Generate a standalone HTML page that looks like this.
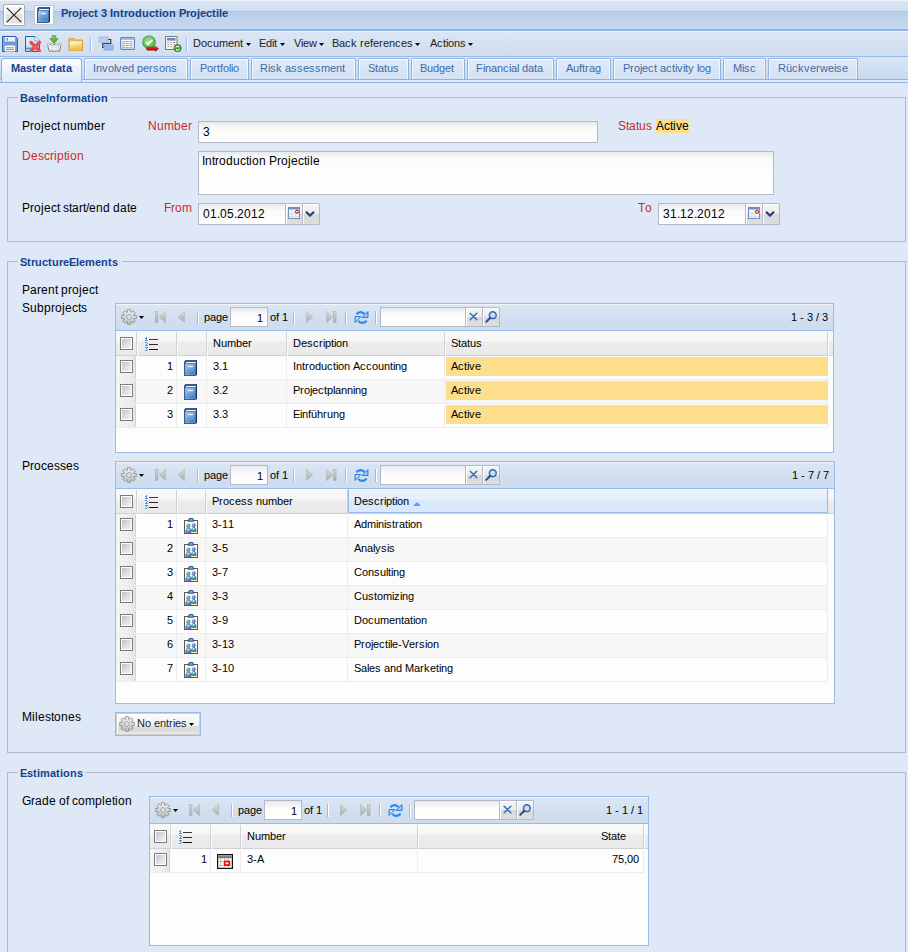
<!DOCTYPE html><html><head><meta charset="utf-8"><style>
html,body{margin:0;padding:0;}
body{width:908px;height:952px;overflow:hidden;position:relative;background:#dfe8f6;font-family:"Liberation Sans", sans-serif;}
.a{position:absolute;}
.t{position:absolute;white-space:nowrap;font-family:"Liberation Sans", sans-serif;font-kerning:none;}
.t i{display:inline-block;font-style:normal;}
.w1{width:1px}
.w2{width:2px}
.w3{width:3px}
.w4{width:4px}
.w5{width:5px}
.w6{width:6px}
.w7{width:7px}
.w8{width:8px}
.w9{width:9px}
.w10{width:10px}
.w11{width:11px}
.w12{width:12px}
.w13{width:13px}
.w14{width:14px}
.w15{width:15px}
.cb{position:absolute;width:11px;height:11px;border:1px solid #7b7b7b;background:linear-gradient(135deg,#b9bdc6,#dfe1e5 55%,#f6f6f6);box-shadow:inset 0 0 0 1px #fff;}
.inp{position:absolute;border:1px solid #b5b8c8;background:linear-gradient(#e8e9ea,#fbfbfb 7px,#fff);}
.trg2{position:absolute;box-sizing:border-box;border:1px solid #b5b8c8;background:linear-gradient(#f5f5f5,#ececec 48%,#d9d9d9 52%,#dedede);box-shadow:inset 1px 1px 0 #fff;border-radius:0 2px 0 0;}
.trg{position:absolute;box-sizing:border-box;border:1px solid #b5b8c8;border-left:1px solid #d5d8e0;background:linear-gradient(#f2f2f2,#e8e8e8 50%,#dcdcdc);}

</style></head><body>
<div class="a" style="left:0px;top:0px;width:908px;height:29px;background:linear-gradient(#eef3f9 0,#eef3f9 1px,#d8e5f4 1px,#cfddf0 11px,#aac5e6 11px,#aac5e6 12px,#b9cee9 12px,#c9daf0 29px);"></div>
<div class="a" style="left:0px;top:29px;width:908px;height:2px;background:#90b4e2;"></div>
<div class="a" style="left:0px;top:31px;width:908px;height:1px;background:#eef3f9;"></div>
<div class="a" style="left:3px;top:4px;width:20px;height:20px;border:1px solid #a9a9a9;border-radius:2px;background:linear-gradient(#f8f8f8 0,#f1f1f1 45%,#e1e1e1 45%,#e3e3e3);box-shadow:inset 0 0 0 1.5px #fff;"></div>
<svg class="a" style="left:6px;top:7px" width="16" height="16" viewBox="0 0 16 16"><path d="M0.8 0.8L15.2 15.2M15.2 0.8L0.8 15.2" stroke="#2a2a2a" stroke-width="1.2"/></svg>
<div class="a" style="left:34px;top:5px;width:18px;height:18px;border:1px solid #c9c9c9;background:#fff;"></div>
<svg class="a" style="left:37px;top:7px" width="14" height="17" viewBox="0 0 14 17"><defs><linearGradient id="bk37_7" x1="0" y1="0" x2="1" y2="1"><stop offset="0" stop-color="#b4d2ee"/><stop offset="1" stop-color="#4f82c2"/></linearGradient><linearGradient id="bk37_7b" x1="0" y1="0" x2="0.6" y2="1"><stop offset="0" stop-color="#9fc2e6"/><stop offset="1" stop-color="#4f85c6"/></linearGradient></defs><path d="M0 1.5L1.5 0H13V14.5L11.5 16H0Z" fill="#2e5b9b"/><path d="M11.9 0.8H13V14.5L12 15.4H11.9Z" fill="#17335f"/><rect x="2" y="2" width="10" height="1.2" fill="#f2f5f9"/><rect x="1.2" y="3.9" width="10.2" height="11.1" fill="url(#bk37_7)"/><rect x="2.4" y="5" width="8" height="9" fill="url(#bk37_7b)"/><rect x="4" y="6" width="5" height="1.1" fill="#eef4fa"/></svg>
<div class="t" style="left:61px;top:7px;font-size:11px;line-height:13px;color:#15428b;font-weight:bold;"><i class="w7">P</i><i class="w4">r</i><i class="w7">o</i><i class="w3">j</i><i class="w6">e</i><i class="w6">c</i><i class="w4">t</i><i class="w3">&nbsp;</i><i class="w6">3</i><i class="w3">&nbsp;</i><i class="w3">I</i><i class="w7">n</i><i class="w4">t</i><i class="w4">r</i><i class="w7">o</i><i class="w7">d</i><i class="w7">u</i><i class="w6">c</i><i class="w4">t</i><i class="w3">i</i><i class="w7">o</i><i class="w7">n</i><i class="w3">&nbsp;</i><i class="w7">P</i><i class="w4">r</i><i class="w7">o</i><i class="w3">j</i><i class="w6">e</i><i class="w6">c</i><i class="w4">t</i><i class="w3">i</i><i class="w3">l</i><i class="w6">e</i></div>
<div class="a" style="left:0px;top:32px;width:908px;height:24px;background:linear-gradient(#dae6f4,#d0ddef);"></div>
<div class="a" style="left:0px;top:56px;width:908px;height:1px;background:#99bbe8;"></div>
<svg class="a" style="left:2px;top:36px" width="16" height="16" viewBox="0 0 16 16"><defs><linearGradient id="svg1" x1="0" y1="0" x2="1" y2="0"><stop offset="0" stop-color="#7aa2dc"/><stop offset="0.5" stop-color="#a8c6ee"/><stop offset="1" stop-color="#6c96d4"/></linearGradient></defs><path d="M0.5 0.5H13.5L15.5 2.5V15.5H0.5Z" fill="url(#svg1)" stroke="#2a5db0" stroke-width="1"/><rect x="3" y="1" width="10" height="4.5" fill="#eef4fb"/><rect x="4.6" y="2" width="1.1" height="2.6" fill="#3a6ab8"/><rect x="2.5" y="5.8" width="11" height="3" fill="#6a96d6"/><rect x="3" y="9.8" width="10" height="5.7" fill="#fff"/><rect x="4" y="11.2" width="8" height="1.1" fill="#76b84a"/><rect x="4" y="13" width="8" height="1.1" fill="#76b84a"/></svg>
<svg class="a" style="left:25px;top:36px" width="16" height="16" viewBox="0 0 16 16"><defs><linearGradient id="dlg" x1="0" y1="0" x2="1" y2="1"><stop offset="0" stop-color="#e4f0fc"/><stop offset="1" stop-color="#b4d2f2"/></linearGradient></defs><path d="M0.5 0.5H10L14.5 5V15.5H0.5Z" fill="url(#dlg)" stroke="#2a5db0" stroke-width="1"/><path d="M10 0.5V5H14.5" fill="#fff" stroke="#6a98d8" stroke-width="0.8"/><rect x="1" y="11.5" width="6" height="2" fill="#48a0ec"/><path d="M6 6.5L14.5 15M14.5 6.5L6 15" stroke="#f34848" stroke-width="3.2" stroke-linecap="round"/><circle cx="10.3" cy="10.8" r="0.9" fill="#ff8a8a"/></svg>
<svg class="a" style="left:46px;top:35px" width="16" height="17" viewBox="0 0 16 17"><defs><linearGradient id="bsa" x1="0" y1="0" x2="0" y2="1"><stop offset="0" stop-color="#9ad85a"/><stop offset="1" stop-color="#3c9c1c"/></linearGradient></defs><path d="M1.5 9.5H15L13.5 16.2H3.2Z" fill="#fafafa" stroke="#7c7c7c" stroke-width="1"/><path d="M5 12H5.8M7.4 12H8.2M9.8 12H10.6M12.2 12H13M5 14.3H5.8M7.4 14.3H8.2M9.8 14.3H10.6M12.2 14.3H13" stroke="#8a8a8a" stroke-width="1"/><circle cx="2.3" cy="9.3" r="1.2" fill="#fff" stroke="#9a9a9a" stroke-width="0.7"/><circle cx="6" cy="9.3" r="1.2" fill="#fff" stroke="#9a9a9a" stroke-width="0.7"/><circle cx="10.5" cy="9.3" r="1.2" fill="#fff" stroke="#9a9a9a" stroke-width="0.7"/><circle cx="14.2" cy="9.3" r="1.2" fill="#fff" stroke="#9a9a9a" stroke-width="0.7"/><path d="M6.3 0.5H9.7V3.6H12.2L8 8.3L3.8 3.6H6.3Z" fill="url(#bsa)" stroke="#3a8a1a" stroke-width="0.6"/></svg>
<svg class="a" style="left:68px;top:38px" width="16" height="13" viewBox="0 0 16 13"><defs><linearGradient id="fdg" x1="0" y1="0" x2="0.3" y2="1"><stop offset="0" stop-color="#fff6cc"/><stop offset="1" stop-color="#efc43a"/></linearGradient></defs><path d="M1 0.8H6.5L7.8 2H14.5V12.2H1Z" fill="#f2c25a" stroke="#e2962e" stroke-width="1"/><rect x="1.8" y="4" width="12" height="7.5" fill="url(#fdg)"/><path d="M2 4H14" stroke="#fff" stroke-width="0.9"/></svg>
<div class="a" style="left:90px;top:38px;width:1px;height:13px;background:#99bbe8;border-right:1px solid #fff;"></div>
<svg class="a" style="left:98px;top:36px" width="16" height="15" viewBox="0 0 16 15"><path d="M10 3.5H12.7V7.5H4.8V11.5H7" fill="none" stroke="#333" stroke-width="1.2"/><rect x="1" y="1" width="9" height="5" fill="#b4d0f4" stroke="#8ab4ec" stroke-width="0.8"/><rect x="6" y="9" width="9" height="5" fill="#92b8ec" stroke="#7aa6e4" stroke-width="0.8"/></svg>
<svg class="a" style="left:120px;top:37px" width="15" height="13" viewBox="0 0 15 13"><rect x="0.6" y="0.6" width="13.8" height="11.8" rx="1" fill="#fff" stroke="#5a88c8" stroke-width="1.2"/><rect x="1.2" y="1.2" width="12.6" height="1.6" fill="#8ab0e4"/><path d="M2.3 4.7H4.6M6 4.7H8.3M9.8 4.7H12.1M2.3 6.7H4.6M6 6.7H8.3M9.8 6.7H12.1M2.3 8.7H4.6M6 8.7H8.3M9.8 8.7H12.1M2.3 10.7H4.6M6 10.7H8.3M9.8 10.7H12.1" stroke="#9a9a9a" stroke-width="1" stroke-linecap="round"/></svg>
<svg class="a" style="left:142px;top:35px" width="17" height="17" viewBox="0 0 17 17"><defs><radialGradient id="gck" cx="45%" cy="40%" r="60%"><stop offset="0" stop-color="#a8e094"/><stop offset="1" stop-color="#56b244"/></radialGradient><linearGradient id="rar" x1="0" y1="0" x2="0" y2="1"><stop offset="0" stop-color="#ff6060"/><stop offset="0.5" stop-color="#e80c0c"/><stop offset="1" stop-color="#b00000"/></linearGradient></defs><circle cx="7" cy="7.2" r="6.3" fill="url(#gck)" stroke="#2ea42a" stroke-width="1.1" stroke-dasharray="1.4 0.5"/><path d="M3.9 7.2L6 9.3L10.3 4.9" fill="none" stroke="#fff" stroke-width="1.9"/><path d="M5.2 12.2H13.2V11L16.6 13.7L13.2 16.4V15.2H5.2C4.2 15.2 4.2 12.2 5.2 12.2Z" fill="url(#rar)" stroke="#700" stroke-width="0.4"/></svg>
<svg class="a" style="left:165px;top:35px" width="17" height="17" viewBox="0 0 17 17"><rect x="0.5" y="1.5" width="11.5" height="13" fill="#f6f6f6" stroke="#7a7a7a" stroke-width="1"/><rect x="2" y="3" width="8.5" height="2.6" fill="#5b8bd2"/><path d="M2.4 7.5H4.2M5.4 7.5H7.2M2.4 9.6H4.2M5.4 9.6H7.2M8.4 9.6H10.2M2.4 11.7H4.2M5.4 11.7H7.2" stroke="#a4a4a4" stroke-width="1"/><path d="M8.4 7.5H10.2" stroke="#e84a4a" stroke-width="1"/><circle cx="12.6" cy="13.2" r="3.6" fill="#3e9c2e" stroke="#2a7a1a" stroke-width="0.8"/><path d="M10.8 12.6A1.9 1.9 0 0 1 14.2 12.1M14.4 13.9A1.9 1.9 0 0 1 11 14.4" fill="none" stroke="#fff" stroke-width="1.1"/></svg>
<div class="a" style="left:186px;top:38px;width:1px;height:13px;background:#99bbe8;border-right:1px solid #fff;"></div>
<div class="t" style="left:193px;top:37px;font-size:11px;line-height:13px;color:#222;"><i class="w8">D</i><i class="w6">o</i><i class="w6">c</i><i class="w6">u</i><i class="w9">m</i><i class="w6">e</i><i class="w6">n</i><i class="w3">t</i></div>
<svg class="a" style="left:246px;top:43px" width="5" height="3" viewBox="0 0 5 3"><path d="M0 0H5L2.5 3Z" fill="#000"/></svg>
<div class="t" style="left:259px;top:37px;font-size:11px;line-height:13px;color:#222;"><i class="w7">E</i><i class="w6">d</i><i class="w2">i</i><i class="w3">t</i></div>
<svg class="a" style="left:280px;top:43px" width="5" height="3" viewBox="0 0 5 3"><path d="M0 0H5L2.5 3Z" fill="#000"/></svg>
<div class="t" style="left:294px;top:37px;font-size:11px;line-height:13px;color:#222;"><i class="w7">V</i><i class="w2">i</i><i class="w6">e</i><i class="w8">w</i></div>
<svg class="a" style="left:319px;top:43px" width="5" height="3" viewBox="0 0 5 3"><path d="M0 0H5L2.5 3Z" fill="#000"/></svg>
<div class="t" style="left:332px;top:37px;font-size:11px;line-height:13px;color:#222;"><i class="w7">B</i><i class="w6">a</i><i class="w6">c</i><i class="w6">k</i><i class="w3">&nbsp;</i><i class="w4">r</i><i class="w6">e</i><i class="w3">f</i><i class="w6">e</i><i class="w4">r</i><i class="w6">e</i><i class="w6">n</i><i class="w6">c</i><i class="w6">e</i><i class="w6">s</i></div>
<svg class="a" style="left:415px;top:43px" width="5" height="3" viewBox="0 0 5 3"><path d="M0 0H5L2.5 3Z" fill="#000"/></svg>
<div class="t" style="left:430px;top:37px;font-size:11px;line-height:13px;color:#222;"><i class="w7">A</i><i class="w6">c</i><i class="w3">t</i><i class="w2">i</i><i class="w6">o</i><i class="w6">n</i><i class="w6">s</i></div>
<svg class="a" style="left:468px;top:43px" width="5" height="3" viewBox="0 0 5 3"><path d="M0 0H5L2.5 3Z" fill="#000"/></svg>
<div class="a" style="left:0px;top:57px;width:908px;height:22px;background:linear-gradient(#dae6f4,#c8daf0);"></div>
<div class="a" style="left:0px;top:79px;width:908px;height:1px;background:#8db2e3;"></div>
<div class="a" style="left:0px;top:80px;width:908px;height:2px;background:#deecfd;"></div>
<div class="a" style="left:0px;top:82px;width:908px;height:1px;background:#8db2e3;"></div>
<div class="a" style="left:1px;top:58px;width:79px;height:23px;border:1px solid #8db2e3;border-bottom:none;border-radius:3px 3px 0 0;background:linear-gradient(#fff,#f0f5fb 8px,#deecfd 22px);"></div>
<div class="t" style="left:11px;top:62px;font-size:11px;line-height:13px;color:#15428b;font-weight:bold;"><i class="w9">M</i><i class="w6">a</i><i class="w6">s</i><i class="w4">t</i><i class="w6">e</i><i class="w4">r</i><i class="w3">&nbsp;</i><i class="w7">d</i><i class="w6">a</i><i class="w4">t</i><i class="w6">a</i></div>
<div class="a" style="left:84px;top:58px;width:102px;height:20px;border:1px solid #8db2e3;border-bottom:none;border-radius:2px 2px 0 0;background:linear-gradient(#e0eaf8,#d4e2f5);box-shadow:inset 0 1px 0 #fff,inset 1px 0 0 #f2f6fc,inset -1px 0 0 #f2f6fc;"></div>
<div class="t" style="left:93px;top:62px;font-size:11px;line-height:13px;color:#416aa3;"><i class="w3">I</i><i class="w6">n</i><i class="w6">v</i><i class="w6">o</i><i class="w2">l</i><i class="w6">v</i><i class="w6">e</i><i class="w6">d</i><i class="w3">&nbsp;</i><i class="w6">p</i><i class="w6">e</i><i class="w4">r</i><i class="w6">s</i><i class="w6">o</i><i class="w6">n</i><i class="w6">s</i></div>
<div class="a" style="left:190px;top:58px;width:57px;height:20px;border:1px solid #8db2e3;border-bottom:none;border-radius:2px 2px 0 0;background:linear-gradient(#e0eaf8,#d4e2f5);box-shadow:inset 0 1px 0 #fff,inset 1px 0 0 #f2f6fc,inset -1px 0 0 #f2f6fc;"></div>
<div class="t" style="left:200px;top:62px;font-size:11px;line-height:13px;color:#416aa3;"><i class="w7">P</i><i class="w6">o</i><i class="w4">r</i><i class="w3">t</i><i class="w3">f</i><i class="w6">o</i><i class="w2">l</i><i class="w2">i</i><i class="w6">o</i></div>
<div class="a" style="left:251px;top:58px;width:103px;height:20px;border:1px solid #8db2e3;border-bottom:none;border-radius:2px 2px 0 0;background:linear-gradient(#e0eaf8,#d4e2f5);box-shadow:inset 0 1px 0 #fff,inset 1px 0 0 #f2f6fc,inset -1px 0 0 #f2f6fc;"></div>
<div class="t" style="left:260px;top:62px;font-size:11px;line-height:13px;color:#416aa3;"><i class="w8">R</i><i class="w2">i</i><i class="w6">s</i><i class="w6">k</i><i class="w3">&nbsp;</i><i class="w6">a</i><i class="w6">s</i><i class="w6">s</i><i class="w6">e</i><i class="w6">s</i><i class="w6">s</i><i class="w9">m</i><i class="w6">e</i><i class="w6">n</i><i class="w3">t</i></div>
<div class="a" style="left:358px;top:58px;width:49px;height:20px;border:1px solid #8db2e3;border-bottom:none;border-radius:2px 2px 0 0;background:linear-gradient(#e0eaf8,#d4e2f5);box-shadow:inset 0 1px 0 #fff,inset 1px 0 0 #f2f6fc,inset -1px 0 0 #f2f6fc;"></div>
<div class="t" style="left:368px;top:62px;font-size:11px;line-height:13px;color:#416aa3;"><i class="w7">S</i><i class="w3">t</i><i class="w6">a</i><i class="w3">t</i><i class="w6">u</i><i class="w6">s</i></div>
<div class="a" style="left:411px;top:58px;width:52px;height:20px;border:1px solid #8db2e3;border-bottom:none;border-radius:2px 2px 0 0;background:linear-gradient(#e0eaf8,#d4e2f5);box-shadow:inset 0 1px 0 #fff,inset 1px 0 0 #f2f6fc,inset -1px 0 0 #f2f6fc;"></div>
<div class="t" style="left:420px;top:62px;font-size:11px;line-height:13px;color:#416aa3;"><i class="w7">B</i><i class="w6">u</i><i class="w6">d</i><i class="w6">g</i><i class="w6">e</i><i class="w3">t</i></div>
<div class="a" style="left:467px;top:58px;width:85px;height:20px;border:1px solid #8db2e3;border-bottom:none;border-radius:2px 2px 0 0;background:linear-gradient(#e0eaf8,#d4e2f5);box-shadow:inset 0 1px 0 #fff,inset 1px 0 0 #f2f6fc,inset -1px 0 0 #f2f6fc;"></div>
<div class="t" style="left:476px;top:62px;font-size:11px;line-height:13px;color:#416aa3;"><i class="w7">F</i><i class="w2">i</i><i class="w6">n</i><i class="w6">a</i><i class="w6">n</i><i class="w6">c</i><i class="w2">i</i><i class="w6">a</i><i class="w2">l</i><i class="w3">&nbsp;</i><i class="w6">d</i><i class="w6">a</i><i class="w3">t</i><i class="w6">a</i></div>
<div class="a" style="left:556px;top:58px;width:53px;height:20px;border:1px solid #8db2e3;border-bottom:none;border-radius:2px 2px 0 0;background:linear-gradient(#e0eaf8,#d4e2f5);box-shadow:inset 0 1px 0 #fff,inset 1px 0 0 #f2f6fc,inset -1px 0 0 #f2f6fc;"></div>
<div class="t" style="left:566px;top:62px;font-size:11px;line-height:13px;color:#416aa3;"><i class="w7">A</i><i class="w6">u</i><i class="w3">f</i><i class="w3">t</i><i class="w4">r</i><i class="w6">a</i><i class="w6">g</i></div>
<div class="a" style="left:613px;top:58px;width:106px;height:20px;border:1px solid #8db2e3;border-bottom:none;border-radius:2px 2px 0 0;background:linear-gradient(#e0eaf8,#d4e2f5);box-shadow:inset 0 1px 0 #fff,inset 1px 0 0 #f2f6fc,inset -1px 0 0 #f2f6fc;"></div>
<div class="t" style="left:623px;top:62px;font-size:11px;line-height:13px;color:#416aa3;"><i class="w7">P</i><i class="w4">r</i><i class="w6">o</i><i class="w2">j</i><i class="w6">e</i><i class="w6">c</i><i class="w3">t</i><i class="w3">&nbsp;</i><i class="w6">a</i><i class="w6">c</i><i class="w3">t</i><i class="w2">i</i><i class="w6">v</i><i class="w2">i</i><i class="w3">t</i><i class="w6">y</i><i class="w3">&nbsp;</i><i class="w2">l</i><i class="w6">o</i><i class="w6">g</i></div>
<div class="a" style="left:723px;top:58px;width:41px;height:20px;border:1px solid #8db2e3;border-bottom:none;border-radius:2px 2px 0 0;background:linear-gradient(#e0eaf8,#d4e2f5);box-shadow:inset 0 1px 0 #fff,inset 1px 0 0 #f2f6fc,inset -1px 0 0 #f2f6fc;"></div>
<div class="t" style="left:733px;top:62px;font-size:11px;line-height:13px;color:#416aa3;"><i class="w9">M</i><i class="w2">i</i><i class="w6">s</i><i class="w6">c</i></div>
<div class="a" style="left:768px;top:58px;width:88px;height:20px;border:1px solid #8db2e3;border-bottom:none;border-radius:2px 2px 0 0;background:linear-gradient(#e0eaf8,#d4e2f5);box-shadow:inset 0 1px 0 #fff,inset 1px 0 0 #f2f6fc,inset -1px 0 0 #f2f6fc;"></div>
<div class="t" style="left:778px;top:62px;font-size:11px;line-height:13px;color:#416aa3;"><i class="w8">R</i><i class="w6">ü</i><i class="w6">c</i><i class="w6">k</i><i class="w6">v</i><i class="w6">e</i><i class="w4">r</i><i class="w8">w</i><i class="w6">e</i><i class="w2">i</i><i class="w6">s</i><i class="w6">e</i></div>
<div class="a" style="left:7px;top:97px;width:897px;height:143px;border:1px solid #b5b8c8;"></div>
<div class="a" style="left:18px;top:92px;width:93px;height:10px;background:#dfe8f6;"></div>
<div class="t" style="left:20px;top:92px;font-size:11px;line-height:13px;color:#15428b;font-weight:bold;"><i class="w8">B</i><i class="w6">a</i><i class="w6">s</i><i class="w6">e</i><i class="w3">I</i><i class="w7">n</i><i class="w4">f</i><i class="w7">o</i><i class="w4">r</i><i class="w10">m</i><i class="w6">a</i><i class="w4">t</i><i class="w3">i</i><i class="w7">o</i><i class="w7">n</i></div>
<div class="t" style="left:22px;top:119px;font-size:12px;line-height:14px;color:#000;"><i class="w8">P</i><i class="w4">r</i><i class="w7">o</i><i class="w3">j</i><i class="w7">e</i><i class="w6">c</i><i class="w3">t</i><i class="w3">&nbsp;</i><i class="w7">n</i><i class="w7">u</i><i class="w10">m</i><i class="w7">b</i><i class="w7">e</i><i class="w4">r</i></div>
<div class="t" style="left:148px;top:119px;font-size:12px;line-height:14px;color:#cc2a2a;"><i class="w9">N</i><i class="w7">u</i><i class="w10">m</i><i class="w7">b</i><i class="w7">e</i><i class="w4">r</i></div>
<div class="inp" style="left:198px;top:121px;width:398px;height:20px;"></div>
<div class="t" style="left:203px;top:125px;font-size:12px;line-height:14px;color:#000;"><i class="w7">3</i></div>
<div class="t" style="left:618px;top:119px;font-size:12px;line-height:14px;color:#cc2a2a;"><i class="w8">S</i><i class="w3">t</i><i class="w7">a</i><i class="w3">t</i><i class="w7">u</i><i class="w6">s</i></div>
<div class="a" style="left:656px;top:119px;width:33px;height:14px;background:#fcde8c;"></div>
<div class="t" style="left:656px;top:119px;font-size:12px;line-height:14px;color:#000;"><i class="w8">A</i><i class="w6">c</i><i class="w3">t</i><i class="w3">i</i><i class="w6">v</i><i class="w7">e</i></div>
<div class="t" style="left:22px;top:149px;font-size:12px;line-height:14px;color:#cc2a2a;"><i class="w9">D</i><i class="w7">e</i><i class="w6">s</i><i class="w6">c</i><i class="w4">r</i><i class="w3">i</i><i class="w7">p</i><i class="w3">t</i><i class="w3">i</i><i class="w7">o</i><i class="w7">n</i></div>
<div class="inp" style="left:198px;top:151px;width:574px;height:42px;"></div>
<div class="t" style="left:202px;top:154px;font-size:12px;line-height:14px;color:#000;"><i class="w3">I</i><i class="w7">n</i><i class="w3">t</i><i class="w4">r</i><i class="w7">o</i><i class="w7">d</i><i class="w7">u</i><i class="w6">c</i><i class="w3">t</i><i class="w3">i</i><i class="w7">o</i><i class="w7">n</i><i class="w3">&nbsp;</i><i class="w8">P</i><i class="w4">r</i><i class="w7">o</i><i class="w3">j</i><i class="w7">e</i><i class="w6">c</i><i class="w3">t</i><i class="w3">i</i><i class="w3">l</i><i class="w7">e</i></div>
<div class="t" style="left:22px;top:201px;font-size:12px;line-height:14px;color:#000;"><i class="w8">P</i><i class="w4">r</i><i class="w7">o</i><i class="w3">j</i><i class="w7">e</i><i class="w6">c</i><i class="w3">t</i><i class="w3">&nbsp;</i><i class="w6">s</i><i class="w3">t</i><i class="w7">a</i><i class="w4">r</i><i class="w3">t</i><i class="w3">/</i><i class="w7">e</i><i class="w7">n</i><i class="w7">d</i><i class="w3">&nbsp;</i><i class="w7">d</i><i class="w7">a</i><i class="w3">t</i><i class="w7">e</i></div>
<div class="t" style="left:164px;top:201px;font-size:12px;line-height:14px;color:#cc2a2a;"><i class="w7">F</i><i class="w4">r</i><i class="w7">o</i><i class="w10">m</i></div>
<div class="t" style="left:638px;top:201px;font-size:12px;line-height:14px;color:#cc2a2a;"><i class="w7">T</i><i class="w7">o</i></div>
<div class="inp" style="left:198px;top:203px;width:86px;height:20px;"></div>
<div class="t" style="left:203px;top:207px;font-size:12px;line-height:14px;color:#000;"><i class="w7">0</i><i class="w7">1</i><i class="w3">.</i><i class="w7">0</i><i class="w7">5</i><i class="w3">.</i><i class="w7">2</i><i class="w7">0</i><i class="w7">1</i><i class="w7">2</i></div>
<div class="trg2" style="left:285px;top:203px;width:18px;height:22px;"></div>
<div class="trg2" style="left:302px;top:203px;width:18px;height:22px;"></div>
<svg class="a" style="left:288px;top:207px" width="12" height="12" viewBox="0 0 12 12"><rect x="0.5" y="0.5" width="11" height="11" fill="#f4f4f4" stroke="#6f8fc0" stroke-width="1"/><rect x="1" y="1" width="10" height="1.5" fill="#6f8fc0"/><path d="M1 6.5H11M1 9.5H11M4 2.5V11M7 2.5V11" stroke="#d8d8d8" stroke-width="0.8"/><circle cx="9" cy="4.7" r="1.5" fill="#fff" stroke="#9a0c0c" stroke-width="1"/></svg>
<svg class="a" style="left:305px;top:211px" width="10" height="6" viewBox="0 0 10 6"><path d="M1 0.8L5 4.6L9 0.8" fill="none" stroke="#1f3f80" stroke-width="2.2"/></svg>
<div class="inp" style="left:658px;top:203px;width:86px;height:20px;"></div>
<div class="t" style="left:663px;top:207px;font-size:12px;line-height:14px;color:#000;"><i class="w7">3</i><i class="w7">1</i><i class="w3">.</i><i class="w7">1</i><i class="w7">2</i><i class="w3">.</i><i class="w7">2</i><i class="w7">0</i><i class="w7">1</i><i class="w7">2</i></div>
<div class="trg2" style="left:745px;top:203px;width:18px;height:22px;"></div>
<div class="trg2" style="left:762px;top:203px;width:18px;height:22px;"></div>
<svg class="a" style="left:748px;top:207px" width="12" height="12" viewBox="0 0 12 12"><rect x="0.5" y="0.5" width="11" height="11" fill="#f4f4f4" stroke="#6f8fc0" stroke-width="1"/><rect x="1" y="1" width="10" height="1.5" fill="#6f8fc0"/><path d="M1 6.5H11M1 9.5H11M4 2.5V11M7 2.5V11" stroke="#d8d8d8" stroke-width="0.8"/><circle cx="9" cy="4.7" r="1.5" fill="#fff" stroke="#9a0c0c" stroke-width="1"/></svg>
<svg class="a" style="left:765px;top:211px" width="10" height="6" viewBox="0 0 10 6"><path d="M1 0.8L5 4.6L9 0.8" fill="none" stroke="#1f3f80" stroke-width="2.2"/></svg>
<div class="a" style="left:7px;top:261px;width:897px;height:490px;border:1px solid #b5b8c8;"></div>
<div class="a" style="left:18px;top:256px;width:104px;height:10px;background:#dfe8f6;"></div>
<div class="t" style="left:20px;top:256px;font-size:11px;line-height:13px;color:#15428b;font-weight:bold;"><i class="w7">S</i><i class="w4">t</i><i class="w4">r</i><i class="w7">u</i><i class="w6">c</i><i class="w4">t</i><i class="w7">u</i><i class="w4">r</i><i class="w6">e</i><i class="w7">E</i><i class="w3">l</i><i class="w6">e</i><i class="w10">m</i><i class="w6">e</i><i class="w7">n</i><i class="w4">t</i><i class="w6">s</i></div>
<div class="t" style="left:22px;top:283px;font-size:12px;line-height:14px;color:#000;"><i class="w8">P</i><i class="w7">a</i><i class="w4">r</i><i class="w7">e</i><i class="w7">n</i><i class="w3">t</i><i class="w3">&nbsp;</i><i class="w7">p</i><i class="w4">r</i><i class="w7">o</i><i class="w3">j</i><i class="w7">e</i><i class="w6">c</i><i class="w3">t</i></div>
<div class="t" style="left:22px;top:301px;font-size:12px;line-height:14px;color:#000;"><i class="w8">S</i><i class="w7">u</i><i class="w7">b</i><i class="w7">p</i><i class="w4">r</i><i class="w7">o</i><i class="w3">j</i><i class="w7">e</i><i class="w6">c</i><i class="w3">t</i><i class="w6">s</i></div>
<div class="a" style="left:115px;top:303px;width:717px;height:148px;border:1px solid #99bbe8;background:#fdfdfd;"></div>
<div class="a" style="left:116px;top:304px;width:717px;height:26px;background:linear-gradient(#dae6f4,#d0def0 60%,#cddcef);border-top:1px solid #f0f5fb;box-sizing:border-box;"></div>
<div class="a" style="left:116px;top:330px;width:717px;height:1px;background:#99bbe8;"></div>
<svg class="a" style="left:121px;top:309px" width="16" height="16" viewBox="0 0 16 16"><defs><linearGradient id="gg121_309" x1="0" y1="0" x2="0" y2="1"><stop offset="0" stop-color="#f2f2f2"/><stop offset="1" stop-color="#bdbdbd"/></linearGradient></defs><path d="M6.51 0.65 L9.49 0.65 L9.67 3.29 L10.15 3.49 L12.14 1.75 L14.25 3.86 L12.51 5.85 L12.71 6.33 L15.35 6.51 L15.35 9.49 L12.71 9.67 L12.51 10.15 L14.25 12.14 L12.14 14.25 L10.15 12.51 L9.67 12.71 L9.49 15.35 L6.51 15.35 L6.33 12.71 L5.85 12.51 L3.86 14.25 L1.75 12.14 L3.49 10.15 L3.29 9.67 L0.65 9.49 L0.65 6.51 L3.29 6.33 L3.49 5.85 L1.75 3.86 L3.86 1.75 L5.85 3.49 L6.33 3.29Z" fill="url(#gg121_309)" stroke="#8e8e8e" stroke-width="0.9" stroke-linejoin="round"/><circle cx="8" cy="8" r="2.4" fill="#d4e2f2" stroke="#9a9a9a" stroke-width="0.8"/></svg>
<svg class="a" style="left:139px;top:316px" width="5" height="3" viewBox="0 0 5 3"><path d="M0 0H5L2.5 3Z" fill="#000"/></svg>
<svg class="a" style="left:155px;top:311px" width="11" height="12" viewBox="0 0 11 12"><defs><linearGradient id="pgg" x1="0" y1="0" x2="0" y2="1"><stop offset="0" stop-color="#dedede"/><stop offset="1" stop-color="#a9a9a9"/></linearGradient></defs><rect x="0.5" y="0.5" width="2.4" height="11" fill="url(#pgg)" stroke="#b0b0b0" stroke-width="0.7"/><path d="M10.5 0.3V11.7L4.2 6Z" fill="url(#pgg)" stroke="#b4b4b4" stroke-width="0.6"/></svg>
<svg class="a" style="left:178px;top:311px" width="7" height="12" viewBox="0 0 7 12"><defs><linearGradient id="pgg" x1="0" y1="0" x2="0" y2="1"><stop offset="0" stop-color="#dedede"/><stop offset="1" stop-color="#a9a9a9"/></linearGradient></defs><path d="M6.5 0.3V11.7L0.3 6Z" fill="url(#pgg)" stroke="#b4b4b4" stroke-width="0.6"/></svg>
<div class="a" style="left:197px;top:311px;width:1px;height:13px;background:#99bbe8;border-right:1px solid #fff;"></div>
<div class="t" style="left:204px;top:311px;font-size:11px;line-height:13px;color:#000;"><i class="w6">p</i><i class="w6">a</i><i class="w6">g</i><i class="w6">e</i></div>
<div class="inp" style="left:230px;top:307px;width:36px;height:18px;"></div>
<div class="t" style="right:645px;top:312px;font-size:11px;line-height:13px;color:#000;"><i class="w6">1</i></div>
<div class="t" style="left:270px;top:311px;font-size:11px;line-height:13px;color:#000;"><i class="w6">o</i><i class="w3">f</i><i class="w3">&nbsp;</i><i class="w6">1</i></div>
<div class="a" style="left:293px;top:311px;width:1px;height:13px;background:#99bbe8;border-right:1px solid #fff;"></div>
<svg class="a" style="left:306px;top:311px" width="7" height="12" viewBox="0 0 7 12"><defs><linearGradient id="pgg" x1="0" y1="0" x2="0" y2="1"><stop offset="0" stop-color="#dedede"/><stop offset="1" stop-color="#a9a9a9"/></linearGradient></defs><path d="M0.5 0.3V11.7L6.7 6Z" fill="url(#pgg)" stroke="#b4b4b4" stroke-width="0.6"/></svg>
<svg class="a" style="left:326px;top:311px" width="11" height="12" viewBox="0 0 11 12"><defs><linearGradient id="pgg" x1="0" y1="0" x2="0" y2="1"><stop offset="0" stop-color="#dedede"/><stop offset="1" stop-color="#a9a9a9"/></linearGradient></defs><path d="M0.5 0.3V11.7L6.8 6Z" fill="url(#pgg)" stroke="#b4b4b4" stroke-width="0.6"/><rect x="7.6" y="0.5" width="2.4" height="11" fill="url(#pgg)" stroke="#b0b0b0" stroke-width="0.7"/></svg>
<div class="a" style="left:345px;top:311px;width:1px;height:13px;background:#99bbe8;border-right:1px solid #fff;"></div>
<svg class="a" style="left:354px;top:310px" width="15" height="15" viewBox="0 0 15 15"><path d="M2.4 4.3A5 5 0 0 1 10.6 4.2" fill="none" stroke="#2a88ee" stroke-width="2.2"/><path d="M8.2 7.4H13.9V1.6Z" fill="#a6d4ff" stroke="#1d6fe0" stroke-width="1"/><path d="M12.6 10.7A5 5 0 0 1 4.4 10.8" fill="none" stroke="#2a88ee" stroke-width="2.2"/><path d="M6.8 6.6H1.1V12.4Z" fill="#c6e2ff" stroke="#1d6fe0" stroke-width="1"/></svg>
<div class="a" style="left:375px;top:311px;width:1px;height:13px;background:#99bbe8;border-right:1px solid #fff;"></div>
<div class="inp" style="left:380px;top:307px;width:84px;height:18px;"></div>
<div class="trg2" style="left:465px;top:307px;width:18px;height:20px;border-radius:0;"></div>
<div class="trg2" style="left:482px;top:307px;width:18px;height:20px;"></div>
<svg class="a" style="left:469px;top:312px" width="9" height="9" viewBox="0 0 9 9"><path d="M1.2 1.2L7.8 7.8M7.8 1.2L1.2 7.8" stroke="#3a6cb0" stroke-width="1.5" stroke-linecap="round"/></svg>
<svg class="a" style="left:484px;top:310px" width="14" height="14" viewBox="0 0 14 14"><circle cx="8.8" cy="5.2" r="3.4" fill="#d0dcec" stroke="#2f68b8" stroke-width="1.5"/><path d="M6.3 7.8L2.2 11.9" stroke="#234f90" stroke-width="2" stroke-linecap="round"/></svg>
<div class="t" style="right:80px;top:311px;font-size:11px;line-height:13px;color:#000;"><i class="w6">1</i><i class="w3">&nbsp;</i><i class="w4">-</i><i class="w3">&nbsp;</i><i class="w6">3</i><i class="w3">&nbsp;</i><i class="w3">/</i><i class="w3">&nbsp;</i><i class="w6">3</i></div>
<div class="a" style="left:116px;top:331px;width:717px;height:25px;background:linear-gradient(#f9f9f9,#f6f6f6 10px,#ededed 11px,#e9e9e9);border-bottom:1px solid #d0d0d0;box-sizing:border-box;"></div>
<div class="a" style="left:136px;top:332px;width:1px;height:24px;background:#d0d0d0;"></div>
<div class="a" style="left:137px;top:332px;width:1px;height:24px;background:#fbfbfb;"></div>
<div class="a" style="left:176px;top:332px;width:1px;height:24px;background:#d0d0d0;"></div>
<div class="a" style="left:177px;top:332px;width:1px;height:24px;background:#fbfbfb;"></div>
<div class="a" style="left:206px;top:332px;width:1px;height:24px;background:#d0d0d0;"></div>
<div class="a" style="left:207px;top:332px;width:1px;height:24px;background:#fbfbfb;"></div>
<div class="a" style="left:286px;top:332px;width:1px;height:24px;background:#d0d0d0;"></div>
<div class="a" style="left:287px;top:332px;width:1px;height:24px;background:#fbfbfb;"></div>
<div class="a" style="left:444px;top:332px;width:1px;height:24px;background:#d0d0d0;"></div>
<div class="a" style="left:445px;top:332px;width:1px;height:24px;background:#fbfbfb;"></div>
<div class="a" style="left:827px;top:332px;width:1px;height:24px;background:#d0d0d0;"></div>
<div class="a" style="left:828px;top:332px;width:1px;height:24px;background:#fbfbfb;"></div>
<div class="cb" style="left:120px;top:337px"></div>
<svg class="a" style="left:145px;top:337px" width="14" height="14" viewBox="0 0 14 14"><rect x="1" y="0" width="1" height="1" fill="#5a94e6"/><rect x="0" y="1" width="1" height="1" fill="#5a94e6"/><rect x="1" y="1" width="1" height="1" fill="#5a94e6"/><rect x="1" y="2" width="1" height="1" fill="#5a94e6"/><rect x="0" y="3" width="1" height="1" fill="#5a94e6"/><rect x="1" y="3" width="1" height="1" fill="#5a94e6"/><rect x="2" y="3" width="1" height="1" fill="#5a94e6"/><rect x="0" y="5" width="1" height="1" fill="#5a94e6"/><rect x="1" y="5" width="1" height="1" fill="#5a94e6"/><rect x="2" y="6" width="1" height="1" fill="#5a94e6"/><rect x="1" y="7" width="1" height="1" fill="#5a94e6"/><rect x="0" y="8" width="1" height="1" fill="#5a94e6"/><rect x="1" y="8" width="1" height="1" fill="#5a94e6"/><rect x="2" y="8" width="1" height="1" fill="#5a94e6"/><rect x="0" y="10" width="1" height="1" fill="#5a94e6"/><rect x="1" y="10" width="1" height="1" fill="#5a94e6"/><rect x="2" y="10" width="1" height="1" fill="#5a94e6"/><rect x="1" y="11" width="1" height="1" fill="#5a94e6"/><rect x="2" y="12" width="1" height="1" fill="#5a94e6"/><rect x="0" y="13" width="1" height="1" fill="#5a94e6"/><rect x="1" y="13" width="1" height="1" fill="#5a94e6"/><rect x="4" y="2" width="9" height="1" fill="#3a3a3a"/><rect x="4" y="7" width="9" height="1" fill="#2a2a2a"/><rect x="4" y="12" width="9" height="1" fill="#111"/></svg>
<div class="t" style="left:213px;top:337px;font-size:11px;line-height:13px;color:#000;"><i class="w8">N</i><i class="w6">u</i><i class="w9">m</i><i class="w6">b</i><i class="w6">e</i><i class="w4">r</i></div>
<div class="t" style="left:293px;top:337px;font-size:11px;line-height:13px;color:#000;"><i class="w8">D</i><i class="w6">e</i><i class="w6">s</i><i class="w6">c</i><i class="w4">r</i><i class="w2">i</i><i class="w6">p</i><i class="w3">t</i><i class="w2">i</i><i class="w6">o</i><i class="w6">n</i></div>
<div class="t" style="left:451px;top:337px;font-size:11px;line-height:13px;color:#000;"><i class="w7">S</i><i class="w3">t</i><i class="w6">a</i><i class="w3">t</i><i class="w6">u</i><i class="w6">s</i></div>
<div class="a" style="left:116px;top:356px;width:712px;height:24px;background:#fdfdfd;border-bottom:1px solid #ededed;box-sizing:border-box;"></div>
<div class="a" style="left:116px;top:356px;width:20px;height:23px;background:linear-gradient(90deg,#f5f5f5,#efefef 60%,#e4e4e4);"></div>
<div class="a" style="left:135px;top:357px;width:1px;height:22px;background:#d4d4d4;"></div>
<div class="a" style="left:176px;top:356px;width:1px;height:23px;background:#ededed;"></div>
<div class="a" style="left:206px;top:356px;width:1px;height:23px;background:#ededed;"></div>
<div class="a" style="left:286px;top:356px;width:1px;height:23px;background:#ededed;"></div>
<div class="a" style="left:444px;top:356px;width:1px;height:23px;background:#ededed;"></div>
<div class="a" style="left:827px;top:356px;width:1px;height:23px;background:#ededed;"></div>
<div class="cb" style="left:120px;top:360px"></div>
<div class="t" style="right:735px;top:360px;font-size:11px;line-height:13px;color:#000;"><i class="w6">1</i></div>
<svg class="a" style="left:184px;top:360px" width="14" height="17" viewBox="0 0 14 17"><defs><linearGradient id="bk184_360" x1="0" y1="0" x2="1" y2="1"><stop offset="0" stop-color="#b4d2ee"/><stop offset="1" stop-color="#4f82c2"/></linearGradient><linearGradient id="bk184_360b" x1="0" y1="0" x2="0.6" y2="1"><stop offset="0" stop-color="#9fc2e6"/><stop offset="1" stop-color="#4f85c6"/></linearGradient></defs><path d="M0 1.5L1.5 0H13V14.5L11.5 16H0Z" fill="#2e5b9b"/><path d="M11.9 0.8H13V14.5L12 15.4H11.9Z" fill="#17335f"/><rect x="2" y="2" width="10" height="1.2" fill="#f2f5f9"/><rect x="1.2" y="3.9" width="10.2" height="11.1" fill="url(#bk184_360)"/><rect x="2.4" y="5" width="8" height="9" fill="url(#bk184_360b)"/><rect x="4" y="6" width="5" height="1.1" fill="#eef4fa"/></svg>
<div class="t" style="left:213px;top:360px;font-size:11px;line-height:13px;color:#000;"><i class="w6">3</i><i class="w3">.</i><i class="w6">1</i></div>
<div class="t" style="left:293px;top:360px;font-size:11px;line-height:13px;color:#000;"><i class="w3">I</i><i class="w6">n</i><i class="w3">t</i><i class="w4">r</i><i class="w6">o</i><i class="w6">d</i><i class="w6">u</i><i class="w6">c</i><i class="w3">t</i><i class="w2">i</i><i class="w6">o</i><i class="w6">n</i><i class="w3">&nbsp;</i><i class="w7">A</i><i class="w6">c</i><i class="w6">c</i><i class="w6">o</i><i class="w6">u</i><i class="w6">n</i><i class="w3">t</i><i class="w2">i</i><i class="w6">n</i><i class="w6">g</i></div>
<div class="a" style="left:446px;top:357px;width:382px;height:19px;background:#fcde8c;"></div>
<div class="t" style="left:451px;top:360px;font-size:11px;line-height:13px;color:#000;"><i class="w7">A</i><i class="w6">c</i><i class="w3">t</i><i class="w2">i</i><i class="w6">v</i><i class="w6">e</i></div>
<div class="a" style="left:116px;top:380px;width:712px;height:24px;background:#f7f7f7;border-bottom:1px solid #ededed;box-sizing:border-box;"></div>
<div class="a" style="left:116px;top:380px;width:20px;height:23px;background:linear-gradient(90deg,#f5f5f5,#efefef 60%,#e4e4e4);"></div>
<div class="a" style="left:135px;top:381px;width:1px;height:22px;background:#d4d4d4;"></div>
<div class="a" style="left:176px;top:380px;width:1px;height:23px;background:#ededed;"></div>
<div class="a" style="left:206px;top:380px;width:1px;height:23px;background:#ededed;"></div>
<div class="a" style="left:286px;top:380px;width:1px;height:23px;background:#ededed;"></div>
<div class="a" style="left:444px;top:380px;width:1px;height:23px;background:#ededed;"></div>
<div class="a" style="left:827px;top:380px;width:1px;height:23px;background:#ededed;"></div>
<div class="cb" style="left:120px;top:384px"></div>
<div class="t" style="right:735px;top:384px;font-size:11px;line-height:13px;color:#000;"><i class="w6">2</i></div>
<svg class="a" style="left:184px;top:384px" width="14" height="17" viewBox="0 0 14 17"><defs><linearGradient id="bk184_384" x1="0" y1="0" x2="1" y2="1"><stop offset="0" stop-color="#b4d2ee"/><stop offset="1" stop-color="#4f82c2"/></linearGradient><linearGradient id="bk184_384b" x1="0" y1="0" x2="0.6" y2="1"><stop offset="0" stop-color="#9fc2e6"/><stop offset="1" stop-color="#4f85c6"/></linearGradient></defs><path d="M0 1.5L1.5 0H13V14.5L11.5 16H0Z" fill="#2e5b9b"/><path d="M11.9 0.8H13V14.5L12 15.4H11.9Z" fill="#17335f"/><rect x="2" y="2" width="10" height="1.2" fill="#f2f5f9"/><rect x="1.2" y="3.9" width="10.2" height="11.1" fill="url(#bk184_384)"/><rect x="2.4" y="5" width="8" height="9" fill="url(#bk184_384b)"/><rect x="4" y="6" width="5" height="1.1" fill="#eef4fa"/></svg>
<div class="t" style="left:213px;top:384px;font-size:11px;line-height:13px;color:#000;"><i class="w6">3</i><i class="w3">.</i><i class="w6">2</i></div>
<div class="t" style="left:293px;top:384px;font-size:11px;line-height:13px;color:#000;"><i class="w7">P</i><i class="w4">r</i><i class="w6">o</i><i class="w2">j</i><i class="w6">e</i><i class="w6">c</i><i class="w3">t</i><i class="w6">p</i><i class="w2">l</i><i class="w6">a</i><i class="w6">n</i><i class="w6">n</i><i class="w2">i</i><i class="w6">n</i><i class="w6">g</i></div>
<div class="a" style="left:446px;top:381px;width:382px;height:19px;background:#fcde8c;"></div>
<div class="t" style="left:451px;top:384px;font-size:11px;line-height:13px;color:#000;"><i class="w7">A</i><i class="w6">c</i><i class="w3">t</i><i class="w2">i</i><i class="w6">v</i><i class="w6">e</i></div>
<div class="a" style="left:116px;top:404px;width:712px;height:24px;background:#fdfdfd;border-bottom:1px solid #ededed;box-sizing:border-box;"></div>
<div class="a" style="left:116px;top:404px;width:20px;height:23px;background:linear-gradient(90deg,#f5f5f5,#efefef 60%,#e4e4e4);"></div>
<div class="a" style="left:135px;top:405px;width:1px;height:22px;background:#d4d4d4;"></div>
<div class="a" style="left:176px;top:404px;width:1px;height:23px;background:#ededed;"></div>
<div class="a" style="left:206px;top:404px;width:1px;height:23px;background:#ededed;"></div>
<div class="a" style="left:286px;top:404px;width:1px;height:23px;background:#ededed;"></div>
<div class="a" style="left:444px;top:404px;width:1px;height:23px;background:#ededed;"></div>
<div class="a" style="left:827px;top:404px;width:1px;height:23px;background:#ededed;"></div>
<div class="cb" style="left:120px;top:408px"></div>
<div class="t" style="right:735px;top:408px;font-size:11px;line-height:13px;color:#000;"><i class="w6">3</i></div>
<svg class="a" style="left:184px;top:408px" width="14" height="17" viewBox="0 0 14 17"><defs><linearGradient id="bk184_408" x1="0" y1="0" x2="1" y2="1"><stop offset="0" stop-color="#b4d2ee"/><stop offset="1" stop-color="#4f82c2"/></linearGradient><linearGradient id="bk184_408b" x1="0" y1="0" x2="0.6" y2="1"><stop offset="0" stop-color="#9fc2e6"/><stop offset="1" stop-color="#4f85c6"/></linearGradient></defs><path d="M0 1.5L1.5 0H13V14.5L11.5 16H0Z" fill="#2e5b9b"/><path d="M11.9 0.8H13V14.5L12 15.4H11.9Z" fill="#17335f"/><rect x="2" y="2" width="10" height="1.2" fill="#f2f5f9"/><rect x="1.2" y="3.9" width="10.2" height="11.1" fill="url(#bk184_408)"/><rect x="2.4" y="5" width="8" height="9" fill="url(#bk184_408b)"/><rect x="4" y="6" width="5" height="1.1" fill="#eef4fa"/></svg>
<div class="t" style="left:213px;top:408px;font-size:11px;line-height:13px;color:#000;"><i class="w6">3</i><i class="w3">.</i><i class="w6">3</i></div>
<div class="t" style="left:293px;top:408px;font-size:11px;line-height:13px;color:#000;"><i class="w7">E</i><i class="w2">i</i><i class="w6">n</i><i class="w3">f</i><i class="w6">ü</i><i class="w6">h</i><i class="w4">r</i><i class="w6">u</i><i class="w6">n</i><i class="w6">g</i></div>
<div class="a" style="left:446px;top:405px;width:382px;height:19px;background:#fcde8c;"></div>
<div class="t" style="left:451px;top:408px;font-size:11px;line-height:13px;color:#000;"><i class="w7">A</i><i class="w6">c</i><i class="w3">t</i><i class="w2">i</i><i class="w6">v</i><i class="w6">e</i></div>
<div class="t" style="left:22px;top:459px;font-size:12px;line-height:14px;color:#000;"><i class="w8">P</i><i class="w4">r</i><i class="w7">o</i><i class="w6">c</i><i class="w7">e</i><i class="w6">s</i><i class="w6">s</i><i class="w7">e</i><i class="w6">s</i></div>
<div class="a" style="left:115px;top:461px;width:718px;height:241px;border:1px solid #99bbe8;background:#fdfdfd;"></div>
<div class="a" style="left:116px;top:462px;width:718px;height:26px;background:linear-gradient(#dae6f4,#d0def0 60%,#cddcef);border-top:1px solid #f0f5fb;box-sizing:border-box;"></div>
<div class="a" style="left:116px;top:488px;width:718px;height:1px;background:#99bbe8;"></div>
<svg class="a" style="left:121px;top:467px" width="16" height="16" viewBox="0 0 16 16"><defs><linearGradient id="gg121_467" x1="0" y1="0" x2="0" y2="1"><stop offset="0" stop-color="#f2f2f2"/><stop offset="1" stop-color="#bdbdbd"/></linearGradient></defs><path d="M6.51 0.65 L9.49 0.65 L9.67 3.29 L10.15 3.49 L12.14 1.75 L14.25 3.86 L12.51 5.85 L12.71 6.33 L15.35 6.51 L15.35 9.49 L12.71 9.67 L12.51 10.15 L14.25 12.14 L12.14 14.25 L10.15 12.51 L9.67 12.71 L9.49 15.35 L6.51 15.35 L6.33 12.71 L5.85 12.51 L3.86 14.25 L1.75 12.14 L3.49 10.15 L3.29 9.67 L0.65 9.49 L0.65 6.51 L3.29 6.33 L3.49 5.85 L1.75 3.86 L3.86 1.75 L5.85 3.49 L6.33 3.29Z" fill="url(#gg121_467)" stroke="#8e8e8e" stroke-width="0.9" stroke-linejoin="round"/><circle cx="8" cy="8" r="2.4" fill="#d4e2f2" stroke="#9a9a9a" stroke-width="0.8"/></svg>
<svg class="a" style="left:139px;top:474px" width="5" height="3" viewBox="0 0 5 3"><path d="M0 0H5L2.5 3Z" fill="#000"/></svg>
<svg class="a" style="left:155px;top:469px" width="11" height="12" viewBox="0 0 11 12"><defs><linearGradient id="pgg" x1="0" y1="0" x2="0" y2="1"><stop offset="0" stop-color="#dedede"/><stop offset="1" stop-color="#a9a9a9"/></linearGradient></defs><rect x="0.5" y="0.5" width="2.4" height="11" fill="url(#pgg)" stroke="#b0b0b0" stroke-width="0.7"/><path d="M10.5 0.3V11.7L4.2 6Z" fill="url(#pgg)" stroke="#b4b4b4" stroke-width="0.6"/></svg>
<svg class="a" style="left:178px;top:469px" width="7" height="12" viewBox="0 0 7 12"><defs><linearGradient id="pgg" x1="0" y1="0" x2="0" y2="1"><stop offset="0" stop-color="#dedede"/><stop offset="1" stop-color="#a9a9a9"/></linearGradient></defs><path d="M6.5 0.3V11.7L0.3 6Z" fill="url(#pgg)" stroke="#b4b4b4" stroke-width="0.6"/></svg>
<div class="a" style="left:197px;top:469px;width:1px;height:13px;background:#99bbe8;border-right:1px solid #fff;"></div>
<div class="t" style="left:204px;top:469px;font-size:11px;line-height:13px;color:#000;"><i class="w6">p</i><i class="w6">a</i><i class="w6">g</i><i class="w6">e</i></div>
<div class="inp" style="left:230px;top:465px;width:36px;height:18px;"></div>
<div class="t" style="right:645px;top:470px;font-size:11px;line-height:13px;color:#000;"><i class="w6">1</i></div>
<div class="t" style="left:270px;top:469px;font-size:11px;line-height:13px;color:#000;"><i class="w6">o</i><i class="w3">f</i><i class="w3">&nbsp;</i><i class="w6">1</i></div>
<div class="a" style="left:293px;top:469px;width:1px;height:13px;background:#99bbe8;border-right:1px solid #fff;"></div>
<svg class="a" style="left:306px;top:469px" width="7" height="12" viewBox="0 0 7 12"><defs><linearGradient id="pgg" x1="0" y1="0" x2="0" y2="1"><stop offset="0" stop-color="#dedede"/><stop offset="1" stop-color="#a9a9a9"/></linearGradient></defs><path d="M0.5 0.3V11.7L6.7 6Z" fill="url(#pgg)" stroke="#b4b4b4" stroke-width="0.6"/></svg>
<svg class="a" style="left:326px;top:469px" width="11" height="12" viewBox="0 0 11 12"><defs><linearGradient id="pgg" x1="0" y1="0" x2="0" y2="1"><stop offset="0" stop-color="#dedede"/><stop offset="1" stop-color="#a9a9a9"/></linearGradient></defs><path d="M0.5 0.3V11.7L6.8 6Z" fill="url(#pgg)" stroke="#b4b4b4" stroke-width="0.6"/><rect x="7.6" y="0.5" width="2.4" height="11" fill="url(#pgg)" stroke="#b0b0b0" stroke-width="0.7"/></svg>
<div class="a" style="left:345px;top:469px;width:1px;height:13px;background:#99bbe8;border-right:1px solid #fff;"></div>
<svg class="a" style="left:354px;top:468px" width="15" height="15" viewBox="0 0 15 15"><path d="M2.4 4.3A5 5 0 0 1 10.6 4.2" fill="none" stroke="#2a88ee" stroke-width="2.2"/><path d="M8.2 7.4H13.9V1.6Z" fill="#a6d4ff" stroke="#1d6fe0" stroke-width="1"/><path d="M12.6 10.7A5 5 0 0 1 4.4 10.8" fill="none" stroke="#2a88ee" stroke-width="2.2"/><path d="M6.8 6.6H1.1V12.4Z" fill="#c6e2ff" stroke="#1d6fe0" stroke-width="1"/></svg>
<div class="a" style="left:375px;top:469px;width:1px;height:13px;background:#99bbe8;border-right:1px solid #fff;"></div>
<div class="inp" style="left:380px;top:465px;width:84px;height:18px;"></div>
<div class="trg2" style="left:465px;top:465px;width:18px;height:20px;border-radius:0;"></div>
<div class="trg2" style="left:482px;top:465px;width:18px;height:20px;"></div>
<svg class="a" style="left:469px;top:470px" width="9" height="9" viewBox="0 0 9 9"><path d="M1.2 1.2L7.8 7.8M7.8 1.2L1.2 7.8" stroke="#3a6cb0" stroke-width="1.5" stroke-linecap="round"/></svg>
<svg class="a" style="left:484px;top:468px" width="14" height="14" viewBox="0 0 14 14"><circle cx="8.8" cy="5.2" r="3.4" fill="#d0dcec" stroke="#2f68b8" stroke-width="1.5"/><path d="M6.3 7.8L2.2 11.9" stroke="#234f90" stroke-width="2" stroke-linecap="round"/></svg>
<div class="t" style="right:79px;top:469px;font-size:11px;line-height:13px;color:#000;"><i class="w6">1</i><i class="w3">&nbsp;</i><i class="w4">-</i><i class="w3">&nbsp;</i><i class="w6">7</i><i class="w3">&nbsp;</i><i class="w3">/</i><i class="w3">&nbsp;</i><i class="w6">7</i></div>
<div class="a" style="left:116px;top:489px;width:718px;height:25px;background:linear-gradient(#f9f9f9,#f6f6f6 10px,#ededed 11px,#e9e9e9);border-bottom:1px solid #d0d0d0;box-sizing:border-box;"></div>
<div class="a" style="left:136px;top:490px;width:1px;height:24px;background:#d0d0d0;"></div>
<div class="a" style="left:137px;top:490px;width:1px;height:24px;background:#fbfbfb;"></div>
<div class="a" style="left:176px;top:490px;width:1px;height:24px;background:#d0d0d0;"></div>
<div class="a" style="left:177px;top:490px;width:1px;height:24px;background:#fbfbfb;"></div>
<div class="a" style="left:205px;top:490px;width:1px;height:24px;background:#d0d0d0;"></div>
<div class="a" style="left:206px;top:490px;width:1px;height:24px;background:#fbfbfb;"></div>
<div class="a" style="left:347px;top:490px;width:1px;height:24px;background:#d0d0d0;"></div>
<div class="a" style="left:348px;top:490px;width:1px;height:24px;background:#fbfbfb;"></div>
<div class="a" style="left:348px;top:489px;width:480px;height:24px;background:linear-gradient(#ebf3fd,#e6effb 10px,#d9e8fb 11px,#d9e8fb);border-left:1px solid #99bbe8;border-right:1px solid #99bbe8;border-bottom:1px solid #99bbe8;box-sizing:border-box;"></div>
<div class="cb" style="left:120px;top:495px"></div>
<svg class="a" style="left:145px;top:495px" width="14" height="14" viewBox="0 0 14 14"><rect x="1" y="0" width="1" height="1" fill="#5a94e6"/><rect x="0" y="1" width="1" height="1" fill="#5a94e6"/><rect x="1" y="1" width="1" height="1" fill="#5a94e6"/><rect x="1" y="2" width="1" height="1" fill="#5a94e6"/><rect x="0" y="3" width="1" height="1" fill="#5a94e6"/><rect x="1" y="3" width="1" height="1" fill="#5a94e6"/><rect x="2" y="3" width="1" height="1" fill="#5a94e6"/><rect x="0" y="5" width="1" height="1" fill="#5a94e6"/><rect x="1" y="5" width="1" height="1" fill="#5a94e6"/><rect x="2" y="6" width="1" height="1" fill="#5a94e6"/><rect x="1" y="7" width="1" height="1" fill="#5a94e6"/><rect x="0" y="8" width="1" height="1" fill="#5a94e6"/><rect x="1" y="8" width="1" height="1" fill="#5a94e6"/><rect x="2" y="8" width="1" height="1" fill="#5a94e6"/><rect x="0" y="10" width="1" height="1" fill="#5a94e6"/><rect x="1" y="10" width="1" height="1" fill="#5a94e6"/><rect x="2" y="10" width="1" height="1" fill="#5a94e6"/><rect x="1" y="11" width="1" height="1" fill="#5a94e6"/><rect x="2" y="12" width="1" height="1" fill="#5a94e6"/><rect x="0" y="13" width="1" height="1" fill="#5a94e6"/><rect x="1" y="13" width="1" height="1" fill="#5a94e6"/><rect x="4" y="2" width="9" height="1" fill="#3a3a3a"/><rect x="4" y="7" width="9" height="1" fill="#2a2a2a"/><rect x="4" y="12" width="9" height="1" fill="#111"/></svg>
<div class="t" style="left:212px;top:495px;font-size:11px;line-height:13px;color:#000;"><i class="w7">P</i><i class="w4">r</i><i class="w6">o</i><i class="w6">c</i><i class="w6">e</i><i class="w6">s</i><i class="w6">s</i><i class="w3">&nbsp;</i><i class="w6">n</i><i class="w6">u</i><i class="w9">m</i><i class="w6">b</i><i class="w6">e</i><i class="w4">r</i></div>
<div class="t" style="left:354px;top:495px;font-size:11px;line-height:13px;color:#000;"><i class="w8">D</i><i class="w6">e</i><i class="w6">s</i><i class="w6">c</i><i class="w4">r</i><i class="w2">i</i><i class="w6">p</i><i class="w3">t</i><i class="w2">i</i><i class="w6">o</i><i class="w6">n</i></div>
<svg class="a" style="left:413px;top:502px" width="8" height="4" viewBox="0 0 8 4"><path d="M0 4H8L4 0Z" fill="#6a9ae0"/></svg>
<div class="a" style="left:116px;top:514px;width:712px;height:24px;background:#fdfdfd;border-bottom:1px solid #ededed;box-sizing:border-box;"></div>
<div class="a" style="left:116px;top:514px;width:20px;height:23px;background:linear-gradient(90deg,#f5f5f5,#efefef 60%,#e4e4e4);"></div>
<div class="a" style="left:135px;top:515px;width:1px;height:22px;background:#d4d4d4;"></div>
<div class="a" style="left:176px;top:514px;width:1px;height:23px;background:#ededed;"></div>
<div class="a" style="left:205px;top:514px;width:1px;height:23px;background:#ededed;"></div>
<div class="a" style="left:347px;top:514px;width:1px;height:23px;background:#ededed;"></div>
<div class="a" style="left:827px;top:514px;width:1px;height:23px;background:#ededed;"></div>
<div class="cb" style="left:120px;top:518px"></div>
<div class="t" style="right:735px;top:518px;font-size:11px;line-height:13px;color:#000;"><i class="w6">1</i></div>
<svg class="a" style="left:184px;top:518px" width="15" height="17" viewBox="0 0 15 17"><defs><linearGradient id="clg" x1="0" y1="0" x2="0" y2="1"><stop offset="0" stop-color="#ffffff"/><stop offset="1" stop-color="#fff4c0"/></linearGradient><radialGradient id="plg" cx="40%" cy="35%" r="70%"><stop offset="0" stop-color="#e8ffff"/><stop offset="0.45" stop-color="#3cc0c4"/><stop offset="1" stop-color="#2a6aa8"/></radialGradient></defs><rect x="0.5" y="2.5" width="13" height="13" fill="url(#clg)" stroke="#5a5a5a" stroke-width="1"/><path d="M3.9 3.2L5.2 0.5H8.8L10.1 3.2Z" fill="#54aaf4" stroke="#1a3a70" stroke-width="0.8"/><circle cx="4.4" cy="7.8" r="1.7" fill="url(#plg)" stroke="#7048b8" stroke-width="0.6"/><path d="M1.8 14.6C1.8 11.4 2.8 10 4.4 10C6 10 7 11.4 7 14.6Z" fill="url(#plg)" stroke="#7048b8" stroke-width="0.7"/><circle cx="9.8" cy="7.2" r="1.6" fill="url(#plg)" stroke="#7048b8" stroke-width="0.6"/><path d="M7.5 13.4C7.5 10.5 8.4 9.3 9.8 9.3C11.2 9.3 12.1 10.5 12.1 13.4Z" fill="url(#plg)" stroke="#7048b8" stroke-width="0.7"/></svg>
<div class="t" style="left:212px;top:518px;font-size:11px;line-height:13px;color:#000;"><i class="w6">3</i><i class="w4">-</i><i class="w6">1</i><i class="w6">1</i></div>
<div class="t" style="left:354px;top:518px;font-size:11px;line-height:13px;color:#000;"><i class="w7">A</i><i class="w6">d</i><i class="w9">m</i><i class="w2">i</i><i class="w6">n</i><i class="w2">i</i><i class="w6">s</i><i class="w3">t</i><i class="w4">r</i><i class="w6">a</i><i class="w3">t</i><i class="w2">i</i><i class="w6">o</i><i class="w6">n</i></div>
<div class="a" style="left:116px;top:538px;width:712px;height:24px;background:#f7f7f7;border-bottom:1px solid #ededed;box-sizing:border-box;"></div>
<div class="a" style="left:116px;top:538px;width:20px;height:23px;background:linear-gradient(90deg,#f5f5f5,#efefef 60%,#e4e4e4);"></div>
<div class="a" style="left:135px;top:539px;width:1px;height:22px;background:#d4d4d4;"></div>
<div class="a" style="left:176px;top:538px;width:1px;height:23px;background:#ededed;"></div>
<div class="a" style="left:205px;top:538px;width:1px;height:23px;background:#ededed;"></div>
<div class="a" style="left:347px;top:538px;width:1px;height:23px;background:#ededed;"></div>
<div class="a" style="left:827px;top:538px;width:1px;height:23px;background:#ededed;"></div>
<div class="cb" style="left:120px;top:542px"></div>
<div class="t" style="right:735px;top:542px;font-size:11px;line-height:13px;color:#000;"><i class="w6">2</i></div>
<svg class="a" style="left:184px;top:542px" width="15" height="17" viewBox="0 0 15 17"><defs><linearGradient id="clg" x1="0" y1="0" x2="0" y2="1"><stop offset="0" stop-color="#ffffff"/><stop offset="1" stop-color="#fff4c0"/></linearGradient><radialGradient id="plg" cx="40%" cy="35%" r="70%"><stop offset="0" stop-color="#e8ffff"/><stop offset="0.45" stop-color="#3cc0c4"/><stop offset="1" stop-color="#2a6aa8"/></radialGradient></defs><rect x="0.5" y="2.5" width="13" height="13" fill="url(#clg)" stroke="#5a5a5a" stroke-width="1"/><path d="M3.9 3.2L5.2 0.5H8.8L10.1 3.2Z" fill="#54aaf4" stroke="#1a3a70" stroke-width="0.8"/><circle cx="4.4" cy="7.8" r="1.7" fill="url(#plg)" stroke="#7048b8" stroke-width="0.6"/><path d="M1.8 14.6C1.8 11.4 2.8 10 4.4 10C6 10 7 11.4 7 14.6Z" fill="url(#plg)" stroke="#7048b8" stroke-width="0.7"/><circle cx="9.8" cy="7.2" r="1.6" fill="url(#plg)" stroke="#7048b8" stroke-width="0.6"/><path d="M7.5 13.4C7.5 10.5 8.4 9.3 9.8 9.3C11.2 9.3 12.1 10.5 12.1 13.4Z" fill="url(#plg)" stroke="#7048b8" stroke-width="0.7"/></svg>
<div class="t" style="left:212px;top:542px;font-size:11px;line-height:13px;color:#000;"><i class="w6">3</i><i class="w4">-</i><i class="w6">5</i></div>
<div class="t" style="left:354px;top:542px;font-size:11px;line-height:13px;color:#000;"><i class="w7">A</i><i class="w6">n</i><i class="w6">a</i><i class="w2">l</i><i class="w6">y</i><i class="w6">s</i><i class="w2">i</i><i class="w6">s</i></div>
<div class="a" style="left:116px;top:562px;width:712px;height:24px;background:#fdfdfd;border-bottom:1px solid #ededed;box-sizing:border-box;"></div>
<div class="a" style="left:116px;top:562px;width:20px;height:23px;background:linear-gradient(90deg,#f5f5f5,#efefef 60%,#e4e4e4);"></div>
<div class="a" style="left:135px;top:563px;width:1px;height:22px;background:#d4d4d4;"></div>
<div class="a" style="left:176px;top:562px;width:1px;height:23px;background:#ededed;"></div>
<div class="a" style="left:205px;top:562px;width:1px;height:23px;background:#ededed;"></div>
<div class="a" style="left:347px;top:562px;width:1px;height:23px;background:#ededed;"></div>
<div class="a" style="left:827px;top:562px;width:1px;height:23px;background:#ededed;"></div>
<div class="cb" style="left:120px;top:566px"></div>
<div class="t" style="right:735px;top:566px;font-size:11px;line-height:13px;color:#000;"><i class="w6">3</i></div>
<svg class="a" style="left:184px;top:566px" width="15" height="17" viewBox="0 0 15 17"><defs><linearGradient id="clg" x1="0" y1="0" x2="0" y2="1"><stop offset="0" stop-color="#ffffff"/><stop offset="1" stop-color="#fff4c0"/></linearGradient><radialGradient id="plg" cx="40%" cy="35%" r="70%"><stop offset="0" stop-color="#e8ffff"/><stop offset="0.45" stop-color="#3cc0c4"/><stop offset="1" stop-color="#2a6aa8"/></radialGradient></defs><rect x="0.5" y="2.5" width="13" height="13" fill="url(#clg)" stroke="#5a5a5a" stroke-width="1"/><path d="M3.9 3.2L5.2 0.5H8.8L10.1 3.2Z" fill="#54aaf4" stroke="#1a3a70" stroke-width="0.8"/><circle cx="4.4" cy="7.8" r="1.7" fill="url(#plg)" stroke="#7048b8" stroke-width="0.6"/><path d="M1.8 14.6C1.8 11.4 2.8 10 4.4 10C6 10 7 11.4 7 14.6Z" fill="url(#plg)" stroke="#7048b8" stroke-width="0.7"/><circle cx="9.8" cy="7.2" r="1.6" fill="url(#plg)" stroke="#7048b8" stroke-width="0.6"/><path d="M7.5 13.4C7.5 10.5 8.4 9.3 9.8 9.3C11.2 9.3 12.1 10.5 12.1 13.4Z" fill="url(#plg)" stroke="#7048b8" stroke-width="0.7"/></svg>
<div class="t" style="left:212px;top:566px;font-size:11px;line-height:13px;color:#000;"><i class="w6">3</i><i class="w4">-</i><i class="w6">7</i></div>
<div class="t" style="left:354px;top:566px;font-size:11px;line-height:13px;color:#000;"><i class="w8">C</i><i class="w6">o</i><i class="w6">n</i><i class="w6">s</i><i class="w6">u</i><i class="w2">l</i><i class="w3">t</i><i class="w2">i</i><i class="w6">n</i><i class="w6">g</i></div>
<div class="a" style="left:116px;top:586px;width:712px;height:24px;background:#f7f7f7;border-bottom:1px solid #ededed;box-sizing:border-box;"></div>
<div class="a" style="left:116px;top:586px;width:20px;height:23px;background:linear-gradient(90deg,#f5f5f5,#efefef 60%,#e4e4e4);"></div>
<div class="a" style="left:135px;top:587px;width:1px;height:22px;background:#d4d4d4;"></div>
<div class="a" style="left:176px;top:586px;width:1px;height:23px;background:#ededed;"></div>
<div class="a" style="left:205px;top:586px;width:1px;height:23px;background:#ededed;"></div>
<div class="a" style="left:347px;top:586px;width:1px;height:23px;background:#ededed;"></div>
<div class="a" style="left:827px;top:586px;width:1px;height:23px;background:#ededed;"></div>
<div class="cb" style="left:120px;top:590px"></div>
<div class="t" style="right:735px;top:590px;font-size:11px;line-height:13px;color:#000;"><i class="w6">4</i></div>
<svg class="a" style="left:184px;top:590px" width="15" height="17" viewBox="0 0 15 17"><defs><linearGradient id="clg" x1="0" y1="0" x2="0" y2="1"><stop offset="0" stop-color="#ffffff"/><stop offset="1" stop-color="#fff4c0"/></linearGradient><radialGradient id="plg" cx="40%" cy="35%" r="70%"><stop offset="0" stop-color="#e8ffff"/><stop offset="0.45" stop-color="#3cc0c4"/><stop offset="1" stop-color="#2a6aa8"/></radialGradient></defs><rect x="0.5" y="2.5" width="13" height="13" fill="url(#clg)" stroke="#5a5a5a" stroke-width="1"/><path d="M3.9 3.2L5.2 0.5H8.8L10.1 3.2Z" fill="#54aaf4" stroke="#1a3a70" stroke-width="0.8"/><circle cx="4.4" cy="7.8" r="1.7" fill="url(#plg)" stroke="#7048b8" stroke-width="0.6"/><path d="M1.8 14.6C1.8 11.4 2.8 10 4.4 10C6 10 7 11.4 7 14.6Z" fill="url(#plg)" stroke="#7048b8" stroke-width="0.7"/><circle cx="9.8" cy="7.2" r="1.6" fill="url(#plg)" stroke="#7048b8" stroke-width="0.6"/><path d="M7.5 13.4C7.5 10.5 8.4 9.3 9.8 9.3C11.2 9.3 12.1 10.5 12.1 13.4Z" fill="url(#plg)" stroke="#7048b8" stroke-width="0.7"/></svg>
<div class="t" style="left:212px;top:590px;font-size:11px;line-height:13px;color:#000;"><i class="w6">3</i><i class="w4">-</i><i class="w6">3</i></div>
<div class="t" style="left:354px;top:590px;font-size:11px;line-height:13px;color:#000;"><i class="w8">C</i><i class="w6">u</i><i class="w6">s</i><i class="w3">t</i><i class="w6">o</i><i class="w9">m</i><i class="w2">i</i><i class="w6">z</i><i class="w2">i</i><i class="w6">n</i><i class="w6">g</i></div>
<div class="a" style="left:116px;top:610px;width:712px;height:24px;background:#fdfdfd;border-bottom:1px solid #ededed;box-sizing:border-box;"></div>
<div class="a" style="left:116px;top:610px;width:20px;height:23px;background:linear-gradient(90deg,#f5f5f5,#efefef 60%,#e4e4e4);"></div>
<div class="a" style="left:135px;top:611px;width:1px;height:22px;background:#d4d4d4;"></div>
<div class="a" style="left:176px;top:610px;width:1px;height:23px;background:#ededed;"></div>
<div class="a" style="left:205px;top:610px;width:1px;height:23px;background:#ededed;"></div>
<div class="a" style="left:347px;top:610px;width:1px;height:23px;background:#ededed;"></div>
<div class="a" style="left:827px;top:610px;width:1px;height:23px;background:#ededed;"></div>
<div class="cb" style="left:120px;top:614px"></div>
<div class="t" style="right:735px;top:614px;font-size:11px;line-height:13px;color:#000;"><i class="w6">5</i></div>
<svg class="a" style="left:184px;top:614px" width="15" height="17" viewBox="0 0 15 17"><defs><linearGradient id="clg" x1="0" y1="0" x2="0" y2="1"><stop offset="0" stop-color="#ffffff"/><stop offset="1" stop-color="#fff4c0"/></linearGradient><radialGradient id="plg" cx="40%" cy="35%" r="70%"><stop offset="0" stop-color="#e8ffff"/><stop offset="0.45" stop-color="#3cc0c4"/><stop offset="1" stop-color="#2a6aa8"/></radialGradient></defs><rect x="0.5" y="2.5" width="13" height="13" fill="url(#clg)" stroke="#5a5a5a" stroke-width="1"/><path d="M3.9 3.2L5.2 0.5H8.8L10.1 3.2Z" fill="#54aaf4" stroke="#1a3a70" stroke-width="0.8"/><circle cx="4.4" cy="7.8" r="1.7" fill="url(#plg)" stroke="#7048b8" stroke-width="0.6"/><path d="M1.8 14.6C1.8 11.4 2.8 10 4.4 10C6 10 7 11.4 7 14.6Z" fill="url(#plg)" stroke="#7048b8" stroke-width="0.7"/><circle cx="9.8" cy="7.2" r="1.6" fill="url(#plg)" stroke="#7048b8" stroke-width="0.6"/><path d="M7.5 13.4C7.5 10.5 8.4 9.3 9.8 9.3C11.2 9.3 12.1 10.5 12.1 13.4Z" fill="url(#plg)" stroke="#7048b8" stroke-width="0.7"/></svg>
<div class="t" style="left:212px;top:614px;font-size:11px;line-height:13px;color:#000;"><i class="w6">3</i><i class="w4">-</i><i class="w6">9</i></div>
<div class="t" style="left:354px;top:614px;font-size:11px;line-height:13px;color:#000;"><i class="w8">D</i><i class="w6">o</i><i class="w6">c</i><i class="w6">u</i><i class="w9">m</i><i class="w6">e</i><i class="w6">n</i><i class="w3">t</i><i class="w6">a</i><i class="w3">t</i><i class="w2">i</i><i class="w6">o</i><i class="w6">n</i></div>
<div class="a" style="left:116px;top:634px;width:712px;height:24px;background:#f7f7f7;border-bottom:1px solid #ededed;box-sizing:border-box;"></div>
<div class="a" style="left:116px;top:634px;width:20px;height:23px;background:linear-gradient(90deg,#f5f5f5,#efefef 60%,#e4e4e4);"></div>
<div class="a" style="left:135px;top:635px;width:1px;height:22px;background:#d4d4d4;"></div>
<div class="a" style="left:176px;top:634px;width:1px;height:23px;background:#ededed;"></div>
<div class="a" style="left:205px;top:634px;width:1px;height:23px;background:#ededed;"></div>
<div class="a" style="left:347px;top:634px;width:1px;height:23px;background:#ededed;"></div>
<div class="a" style="left:827px;top:634px;width:1px;height:23px;background:#ededed;"></div>
<div class="cb" style="left:120px;top:638px"></div>
<div class="t" style="right:735px;top:638px;font-size:11px;line-height:13px;color:#000;"><i class="w6">6</i></div>
<svg class="a" style="left:184px;top:638px" width="15" height="17" viewBox="0 0 15 17"><defs><linearGradient id="clg" x1="0" y1="0" x2="0" y2="1"><stop offset="0" stop-color="#ffffff"/><stop offset="1" stop-color="#fff4c0"/></linearGradient><radialGradient id="plg" cx="40%" cy="35%" r="70%"><stop offset="0" stop-color="#e8ffff"/><stop offset="0.45" stop-color="#3cc0c4"/><stop offset="1" stop-color="#2a6aa8"/></radialGradient></defs><rect x="0.5" y="2.5" width="13" height="13" fill="url(#clg)" stroke="#5a5a5a" stroke-width="1"/><path d="M3.9 3.2L5.2 0.5H8.8L10.1 3.2Z" fill="#54aaf4" stroke="#1a3a70" stroke-width="0.8"/><circle cx="4.4" cy="7.8" r="1.7" fill="url(#plg)" stroke="#7048b8" stroke-width="0.6"/><path d="M1.8 14.6C1.8 11.4 2.8 10 4.4 10C6 10 7 11.4 7 14.6Z" fill="url(#plg)" stroke="#7048b8" stroke-width="0.7"/><circle cx="9.8" cy="7.2" r="1.6" fill="url(#plg)" stroke="#7048b8" stroke-width="0.6"/><path d="M7.5 13.4C7.5 10.5 8.4 9.3 9.8 9.3C11.2 9.3 12.1 10.5 12.1 13.4Z" fill="url(#plg)" stroke="#7048b8" stroke-width="0.7"/></svg>
<div class="t" style="left:212px;top:638px;font-size:11px;line-height:13px;color:#000;"><i class="w6">3</i><i class="w4">-</i><i class="w6">1</i><i class="w6">3</i></div>
<div class="t" style="left:354px;top:638px;font-size:11px;line-height:13px;color:#000;"><i class="w7">P</i><i class="w4">r</i><i class="w6">o</i><i class="w2">j</i><i class="w6">e</i><i class="w6">c</i><i class="w3">t</i><i class="w2">i</i><i class="w2">l</i><i class="w6">e</i><i class="w4">-</i><i class="w7">V</i><i class="w6">e</i><i class="w4">r</i><i class="w6">s</i><i class="w2">i</i><i class="w6">o</i><i class="w6">n</i></div>
<div class="a" style="left:116px;top:658px;width:712px;height:24px;background:#fdfdfd;border-bottom:1px solid #ededed;box-sizing:border-box;"></div>
<div class="a" style="left:116px;top:658px;width:20px;height:23px;background:linear-gradient(90deg,#f5f5f5,#efefef 60%,#e4e4e4);"></div>
<div class="a" style="left:135px;top:659px;width:1px;height:22px;background:#d4d4d4;"></div>
<div class="a" style="left:176px;top:658px;width:1px;height:23px;background:#ededed;"></div>
<div class="a" style="left:205px;top:658px;width:1px;height:23px;background:#ededed;"></div>
<div class="a" style="left:347px;top:658px;width:1px;height:23px;background:#ededed;"></div>
<div class="a" style="left:827px;top:658px;width:1px;height:23px;background:#ededed;"></div>
<div class="cb" style="left:120px;top:662px"></div>
<div class="t" style="right:735px;top:662px;font-size:11px;line-height:13px;color:#000;"><i class="w6">7</i></div>
<svg class="a" style="left:184px;top:662px" width="15" height="17" viewBox="0 0 15 17"><defs><linearGradient id="clg" x1="0" y1="0" x2="0" y2="1"><stop offset="0" stop-color="#ffffff"/><stop offset="1" stop-color="#fff4c0"/></linearGradient><radialGradient id="plg" cx="40%" cy="35%" r="70%"><stop offset="0" stop-color="#e8ffff"/><stop offset="0.45" stop-color="#3cc0c4"/><stop offset="1" stop-color="#2a6aa8"/></radialGradient></defs><rect x="0.5" y="2.5" width="13" height="13" fill="url(#clg)" stroke="#5a5a5a" stroke-width="1"/><path d="M3.9 3.2L5.2 0.5H8.8L10.1 3.2Z" fill="#54aaf4" stroke="#1a3a70" stroke-width="0.8"/><circle cx="4.4" cy="7.8" r="1.7" fill="url(#plg)" stroke="#7048b8" stroke-width="0.6"/><path d="M1.8 14.6C1.8 11.4 2.8 10 4.4 10C6 10 7 11.4 7 14.6Z" fill="url(#plg)" stroke="#7048b8" stroke-width="0.7"/><circle cx="9.8" cy="7.2" r="1.6" fill="url(#plg)" stroke="#7048b8" stroke-width="0.6"/><path d="M7.5 13.4C7.5 10.5 8.4 9.3 9.8 9.3C11.2 9.3 12.1 10.5 12.1 13.4Z" fill="url(#plg)" stroke="#7048b8" stroke-width="0.7"/></svg>
<div class="t" style="left:212px;top:662px;font-size:11px;line-height:13px;color:#000;"><i class="w6">3</i><i class="w4">-</i><i class="w6">1</i><i class="w6">0</i></div>
<div class="t" style="left:354px;top:662px;font-size:11px;line-height:13px;color:#000;"><i class="w7">S</i><i class="w6">a</i><i class="w2">l</i><i class="w6">e</i><i class="w6">s</i><i class="w3">&nbsp;</i><i class="w6">a</i><i class="w6">n</i><i class="w6">d</i><i class="w3">&nbsp;</i><i class="w9">M</i><i class="w6">a</i><i class="w4">r</i><i class="w6">k</i><i class="w6">e</i><i class="w3">t</i><i class="w2">i</i><i class="w6">n</i><i class="w6">g</i></div>
<div class="t" style="left:22px;top:710px;font-size:12px;line-height:14px;color:#000;"><i class="w10">M</i><i class="w3">i</i><i class="w3">l</i><i class="w7">e</i><i class="w6">s</i><i class="w3">t</i><i class="w7">o</i><i class="w7">n</i><i class="w7">e</i><i class="w6">s</i></div>
<div class="a" style="left:115px;top:712px;width:84px;height:22px;border:1px solid #99bbe8;"></div>
<div class="a" style="left:116px;top:713px;width:84px;height:22px;border:1px solid #cfcfcf;box-sizing:border-box;background:linear-gradient(#fbfbfb,#f2f2f2 60%,#dcdcdc 60%,#dcdcdc 85%,#ececec);box-shadow:inset 1px 1px 0 #fff;"></div>
<svg class="a" style="left:119px;top:716px" width="16" height="16" viewBox="0 0 16 16"><defs><linearGradient id="gg119_716" x1="0" y1="0" x2="0" y2="1"><stop offset="0" stop-color="#f2f2f2"/><stop offset="1" stop-color="#bdbdbd"/></linearGradient></defs><path d="M6.51 0.65 L9.49 0.65 L9.67 3.29 L10.15 3.49 L12.14 1.75 L14.25 3.86 L12.51 5.85 L12.71 6.33 L15.35 6.51 L15.35 9.49 L12.71 9.67 L12.51 10.15 L14.25 12.14 L12.14 14.25 L10.15 12.51 L9.67 12.71 L9.49 15.35 L6.51 15.35 L6.33 12.71 L5.85 12.51 L3.86 14.25 L1.75 12.14 L3.49 10.15 L3.29 9.67 L0.65 9.49 L0.65 6.51 L3.29 6.33 L3.49 5.85 L1.75 3.86 L3.86 1.75 L5.85 3.49 L6.33 3.29Z" fill="url(#gg119_716)" stroke="#8e8e8e" stroke-width="0.9" stroke-linejoin="round"/><circle cx="8" cy="8" r="2.4" fill="#d4e2f2" stroke="#9a9a9a" stroke-width="0.8"/></svg>
<div class="t" style="left:137px;top:717px;font-size:11px;line-height:13px;color:#222;"><i class="w8">N</i><i class="w6">o</i><i class="w3">&nbsp;</i><i class="w6">e</i><i class="w6">n</i><i class="w3">t</i><i class="w4">r</i><i class="w2">i</i><i class="w6">e</i><i class="w6">s</i></div>
<svg class="a" style="left:189px;top:723px" width="5" height="3" viewBox="0 0 5 3"><path d="M0 0H5L2.5 3Z" fill="#000"/></svg>
<div class="a" style="left:7px;top:772px;width:897px;height:217px;border:1px solid #b5b8c8;"></div>
<div class="a" style="left:18px;top:767px;width:68px;height:10px;background:#dfe8f6;"></div>
<div class="t" style="left:20px;top:767px;font-size:11px;line-height:13px;color:#15428b;font-weight:bold;"><i class="w7">E</i><i class="w6">s</i><i class="w4">t</i><i class="w3">i</i><i class="w10">m</i><i class="w6">a</i><i class="w4">t</i><i class="w3">i</i><i class="w7">o</i><i class="w7">n</i><i class="w6">s</i></div>
<div class="t" style="left:22px;top:794px;font-size:12px;line-height:14px;color:#000;"><i class="w9">G</i><i class="w4">r</i><i class="w7">a</i><i class="w7">d</i><i class="w7">e</i><i class="w3">&nbsp;</i><i class="w7">o</i><i class="w3">f</i><i class="w3">&nbsp;</i><i class="w6">c</i><i class="w7">o</i><i class="w10">m</i><i class="w7">p</i><i class="w3">l</i><i class="w7">e</i><i class="w3">t</i><i class="w3">i</i><i class="w7">o</i><i class="w7">n</i></div>
<div class="a" style="left:149px;top:796px;width:498px;height:148px;border:1px solid #99bbe8;background:#fdfdfd;"></div>
<div class="a" style="left:150px;top:797px;width:498px;height:26px;background:linear-gradient(#dae6f4,#d0def0 60%,#cddcef);border-top:1px solid #f0f5fb;box-sizing:border-box;"></div>
<div class="a" style="left:150px;top:823px;width:498px;height:1px;background:#99bbe8;"></div>
<svg class="a" style="left:155px;top:802px" width="16" height="16" viewBox="0 0 16 16"><defs><linearGradient id="gg155_802" x1="0" y1="0" x2="0" y2="1"><stop offset="0" stop-color="#f2f2f2"/><stop offset="1" stop-color="#bdbdbd"/></linearGradient></defs><path d="M6.51 0.65 L9.49 0.65 L9.67 3.29 L10.15 3.49 L12.14 1.75 L14.25 3.86 L12.51 5.85 L12.71 6.33 L15.35 6.51 L15.35 9.49 L12.71 9.67 L12.51 10.15 L14.25 12.14 L12.14 14.25 L10.15 12.51 L9.67 12.71 L9.49 15.35 L6.51 15.35 L6.33 12.71 L5.85 12.51 L3.86 14.25 L1.75 12.14 L3.49 10.15 L3.29 9.67 L0.65 9.49 L0.65 6.51 L3.29 6.33 L3.49 5.85 L1.75 3.86 L3.86 1.75 L5.85 3.49 L6.33 3.29Z" fill="url(#gg155_802)" stroke="#8e8e8e" stroke-width="0.9" stroke-linejoin="round"/><circle cx="8" cy="8" r="2.4" fill="#d4e2f2" stroke="#9a9a9a" stroke-width="0.8"/></svg>
<svg class="a" style="left:173px;top:809px" width="5" height="3" viewBox="0 0 5 3"><path d="M0 0H5L2.5 3Z" fill="#000"/></svg>
<svg class="a" style="left:189px;top:804px" width="11" height="12" viewBox="0 0 11 12"><defs><linearGradient id="pgg" x1="0" y1="0" x2="0" y2="1"><stop offset="0" stop-color="#dedede"/><stop offset="1" stop-color="#a9a9a9"/></linearGradient></defs><rect x="0.5" y="0.5" width="2.4" height="11" fill="url(#pgg)" stroke="#b0b0b0" stroke-width="0.7"/><path d="M10.5 0.3V11.7L4.2 6Z" fill="url(#pgg)" stroke="#b4b4b4" stroke-width="0.6"/></svg>
<svg class="a" style="left:212px;top:804px" width="7" height="12" viewBox="0 0 7 12"><defs><linearGradient id="pgg" x1="0" y1="0" x2="0" y2="1"><stop offset="0" stop-color="#dedede"/><stop offset="1" stop-color="#a9a9a9"/></linearGradient></defs><path d="M6.5 0.3V11.7L0.3 6Z" fill="url(#pgg)" stroke="#b4b4b4" stroke-width="0.6"/></svg>
<div class="a" style="left:231px;top:804px;width:1px;height:13px;background:#99bbe8;border-right:1px solid #fff;"></div>
<div class="t" style="left:238px;top:804px;font-size:11px;line-height:13px;color:#000;"><i class="w6">p</i><i class="w6">a</i><i class="w6">g</i><i class="w6">e</i></div>
<div class="inp" style="left:264px;top:800px;width:36px;height:18px;"></div>
<div class="t" style="right:611px;top:805px;font-size:11px;line-height:13px;color:#000;"><i class="w6">1</i></div>
<div class="t" style="left:304px;top:804px;font-size:11px;line-height:13px;color:#000;"><i class="w6">o</i><i class="w3">f</i><i class="w3">&nbsp;</i><i class="w6">1</i></div>
<div class="a" style="left:327px;top:804px;width:1px;height:13px;background:#99bbe8;border-right:1px solid #fff;"></div>
<svg class="a" style="left:340px;top:804px" width="7" height="12" viewBox="0 0 7 12"><defs><linearGradient id="pgg" x1="0" y1="0" x2="0" y2="1"><stop offset="0" stop-color="#dedede"/><stop offset="1" stop-color="#a9a9a9"/></linearGradient></defs><path d="M0.5 0.3V11.7L6.7 6Z" fill="url(#pgg)" stroke="#b4b4b4" stroke-width="0.6"/></svg>
<svg class="a" style="left:360px;top:804px" width="11" height="12" viewBox="0 0 11 12"><defs><linearGradient id="pgg" x1="0" y1="0" x2="0" y2="1"><stop offset="0" stop-color="#dedede"/><stop offset="1" stop-color="#a9a9a9"/></linearGradient></defs><path d="M0.5 0.3V11.7L6.8 6Z" fill="url(#pgg)" stroke="#b4b4b4" stroke-width="0.6"/><rect x="7.6" y="0.5" width="2.4" height="11" fill="url(#pgg)" stroke="#b0b0b0" stroke-width="0.7"/></svg>
<div class="a" style="left:379px;top:804px;width:1px;height:13px;background:#99bbe8;border-right:1px solid #fff;"></div>
<svg class="a" style="left:388px;top:803px" width="15" height="15" viewBox="0 0 15 15"><path d="M2.4 4.3A5 5 0 0 1 10.6 4.2" fill="none" stroke="#2a88ee" stroke-width="2.2"/><path d="M8.2 7.4H13.9V1.6Z" fill="#a6d4ff" stroke="#1d6fe0" stroke-width="1"/><path d="M12.6 10.7A5 5 0 0 1 4.4 10.8" fill="none" stroke="#2a88ee" stroke-width="2.2"/><path d="M6.8 6.6H1.1V12.4Z" fill="#c6e2ff" stroke="#1d6fe0" stroke-width="1"/></svg>
<div class="a" style="left:409px;top:804px;width:1px;height:13px;background:#99bbe8;border-right:1px solid #fff;"></div>
<div class="inp" style="left:414px;top:800px;width:84px;height:18px;"></div>
<div class="trg2" style="left:499px;top:800px;width:18px;height:20px;border-radius:0;"></div>
<div class="trg2" style="left:516px;top:800px;width:18px;height:20px;"></div>
<svg class="a" style="left:503px;top:805px" width="9" height="9" viewBox="0 0 9 9"><path d="M1.2 1.2L7.8 7.8M7.8 1.2L1.2 7.8" stroke="#3a6cb0" stroke-width="1.5" stroke-linecap="round"/></svg>
<svg class="a" style="left:518px;top:803px" width="14" height="14" viewBox="0 0 14 14"><circle cx="8.8" cy="5.2" r="3.4" fill="#d0dcec" stroke="#2f68b8" stroke-width="1.5"/><path d="M6.3 7.8L2.2 11.9" stroke="#234f90" stroke-width="2" stroke-linecap="round"/></svg>
<div class="t" style="right:265px;top:804px;font-size:11px;line-height:13px;color:#000;"><i class="w6">1</i><i class="w3">&nbsp;</i><i class="w4">-</i><i class="w3">&nbsp;</i><i class="w6">1</i><i class="w3">&nbsp;</i><i class="w3">/</i><i class="w3">&nbsp;</i><i class="w6">1</i></div>
<div class="a" style="left:150px;top:824px;width:498px;height:25px;background:linear-gradient(#f9f9f9,#f6f6f6 10px,#ededed 11px,#e9e9e9);border-bottom:1px solid #d0d0d0;box-sizing:border-box;"></div>
<div class="a" style="left:170px;top:825px;width:1px;height:24px;background:#d0d0d0;"></div>
<div class="a" style="left:171px;top:825px;width:1px;height:24px;background:#fbfbfb;"></div>
<div class="a" style="left:210px;top:825px;width:1px;height:24px;background:#d0d0d0;"></div>
<div class="a" style="left:211px;top:825px;width:1px;height:24px;background:#fbfbfb;"></div>
<div class="a" style="left:240px;top:825px;width:1px;height:24px;background:#d0d0d0;"></div>
<div class="a" style="left:241px;top:825px;width:1px;height:24px;background:#fbfbfb;"></div>
<div class="a" style="left:417px;top:825px;width:1px;height:24px;background:#d0d0d0;"></div>
<div class="a" style="left:418px;top:825px;width:1px;height:24px;background:#fbfbfb;"></div>
<div class="a" style="left:643px;top:825px;width:1px;height:24px;background:#d0d0d0;"></div>
<div class="a" style="left:644px;top:825px;width:1px;height:24px;background:#fbfbfb;"></div>
<div class="cb" style="left:154px;top:830px"></div>
<svg class="a" style="left:179px;top:830px" width="14" height="14" viewBox="0 0 14 14"><rect x="1" y="0" width="1" height="1" fill="#5a94e6"/><rect x="0" y="1" width="1" height="1" fill="#5a94e6"/><rect x="1" y="1" width="1" height="1" fill="#5a94e6"/><rect x="1" y="2" width="1" height="1" fill="#5a94e6"/><rect x="0" y="3" width="1" height="1" fill="#5a94e6"/><rect x="1" y="3" width="1" height="1" fill="#5a94e6"/><rect x="2" y="3" width="1" height="1" fill="#5a94e6"/><rect x="0" y="5" width="1" height="1" fill="#5a94e6"/><rect x="1" y="5" width="1" height="1" fill="#5a94e6"/><rect x="2" y="6" width="1" height="1" fill="#5a94e6"/><rect x="1" y="7" width="1" height="1" fill="#5a94e6"/><rect x="0" y="8" width="1" height="1" fill="#5a94e6"/><rect x="1" y="8" width="1" height="1" fill="#5a94e6"/><rect x="2" y="8" width="1" height="1" fill="#5a94e6"/><rect x="0" y="10" width="1" height="1" fill="#5a94e6"/><rect x="1" y="10" width="1" height="1" fill="#5a94e6"/><rect x="2" y="10" width="1" height="1" fill="#5a94e6"/><rect x="1" y="11" width="1" height="1" fill="#5a94e6"/><rect x="2" y="12" width="1" height="1" fill="#5a94e6"/><rect x="0" y="13" width="1" height="1" fill="#5a94e6"/><rect x="1" y="13" width="1" height="1" fill="#5a94e6"/><rect x="4" y="2" width="9" height="1" fill="#3a3a3a"/><rect x="4" y="7" width="9" height="1" fill="#2a2a2a"/><rect x="4" y="12" width="9" height="1" fill="#111"/></svg>
<div class="t" style="left:247px;top:830px;font-size:11px;line-height:13px;color:#000;"><i class="w8">N</i><i class="w6">u</i><i class="w9">m</i><i class="w6">b</i><i class="w6">e</i><i class="w4">r</i></div>
<div class="t" style="right:282px;top:830px;font-size:11px;line-height:13px;color:#000;"><i class="w7">S</i><i class="w3">t</i><i class="w6">a</i><i class="w3">t</i><i class="w6">e</i></div>
<div class="a" style="left:150px;top:849px;width:494px;height:24px;background:#fdfdfd;border-bottom:1px solid #ededed;box-sizing:border-box;"></div>
<div class="a" style="left:150px;top:849px;width:20px;height:23px;background:linear-gradient(90deg,#f5f5f5,#efefef 60%,#e4e4e4);"></div>
<div class="a" style="left:169px;top:850px;width:1px;height:22px;background:#d4d4d4;"></div>
<div class="a" style="left:210px;top:849px;width:1px;height:23px;background:#ededed;"></div>
<div class="a" style="left:240px;top:849px;width:1px;height:23px;background:#ededed;"></div>
<div class="a" style="left:417px;top:849px;width:1px;height:23px;background:#ededed;"></div>
<div class="a" style="left:643px;top:849px;width:1px;height:23px;background:#ededed;"></div>
<div class="cb" style="left:154px;top:853px"></div>
<div class="t" style="right:701px;top:853px;font-size:11px;line-height:13px;color:#000;"><i class="w6">1</i></div>
<svg class="a" style="left:217px;top:854px" width="16" height="15" viewBox="0 0 16 15"><defs><linearGradient id="calh" x1="0" y1="0" x2="0" y2="1"><stop offset="0" stop-color="#9a9a9a"/><stop offset="1" stop-color="#6a6a6a"/></linearGradient></defs><rect x="0.6" y="0.6" width="14.8" height="13.8" fill="#fffbe6" stroke="#111" stroke-width="1.2"/><rect x="1.2" y="1.2" width="13.6" height="3" fill="url(#calh)"/><path d="M1 7.5H15M1 11.5H15M3.7 4V14M7.5 4V14M11.3 4V14" stroke="#b8b8b0" stroke-width="0.9"/><rect x="7.6" y="7.4" width="4.8" height="3.8" rx="1" fill="#dff8f8" stroke="#f00" stroke-width="1.8"/></svg>
<div class="t" style="left:247px;top:853px;font-size:11px;line-height:13px;color:#000;"><i class="w6">3</i><i class="w4">-</i><i class="w7">A</i></div>
<div class="t" style="right:269px;top:853px;font-size:11px;line-height:13px;color:#000;"><i class="w6">7</i><i class="w6">5</i><i class="w3">,</i><i class="w6">0</i><i class="w6">0</i></div>
</body></html>
